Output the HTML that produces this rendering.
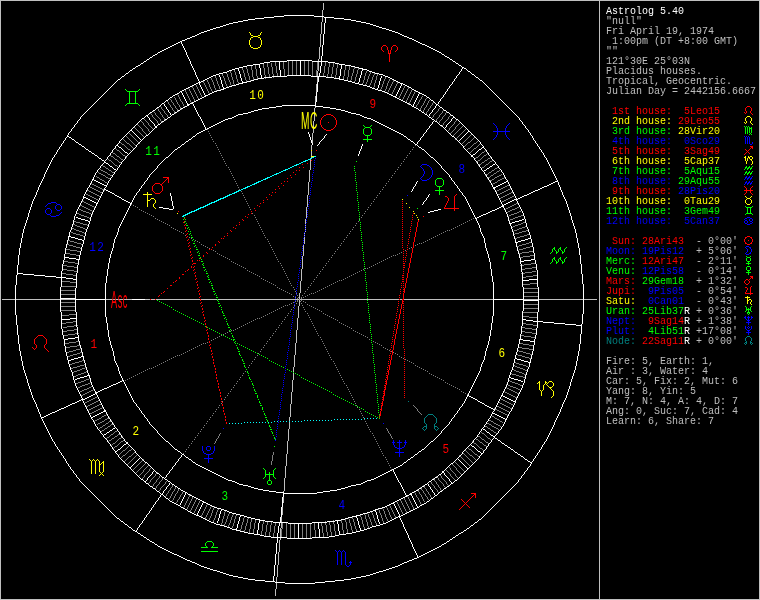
<!DOCTYPE html>
<html><head><meta charset="utf-8"><title>Astrolog 5.40</title>
<style>
html,body{margin:0;padding:0;background:#000;}
body{width:760px;height:600px;position:relative;overflow:hidden;font-family:"Liberation Mono",monospace;}
svg{will-change:transform;position:absolute;left:0;top:0;display:block}
#pix path{fill:none;stroke-width:1}
#hn text{font-family:"Liberation Mono",monospace;font-size:11px;text-anchor:middle;letter-spacing:1.4px}
#side{will-change:transform;position:absolute;left:606px;top:0;width:153px;color:#bfbfbf;font-size:10px;line-height:10px;}
#side div{position:absolute;left:0;white-space:pre;height:10px;}
.w{color:#fff}.r{color:#f00}.y{color:#ff0}.g{color:#0f0}.b{color:#00f}.c{color:#007f7f}.l{color:#bfbfbf}
</style></head><body>
<svg width="760" height="600" viewBox="0 0 760 600" shape-rendering="crispEdges">
<g id="pix">
<path stroke="#ffffff" transform="translate(0 .5)" d="M284 15h30M274 16h10M314 16h10M264 17h10M324 17h10M255 18h9M334 18h10M248 19h7M344 19h7M243 20h5M351 20h5M238 21h5M356 21h5M233 22h5M361 22h5M229 23h4M366 23h4M226 24h3M370 24h3M223 25h3M373 25h3M220 26h3M376 26h3M216 27h4M379 27h3M213 28h3M382 28h4M210 29h3M386 29h3M207 30h3M389 30h3M204 31h3M392 31h3M201 32h3M395 32h3M199 33h2M398 33h2M197 34h2M400 34h2M195 35h2M402 35h2M192 36h3M404 36h3M190 37h2M407 37h2M187 38h3M409 38h3M185 39h2M412 39h2M182 40h3M414 40h2M180 41h2M416 41h2M178 42h2M418 42h2M176 43h2M420 43h2M174 44h2M422 44h3M172 45h2M425 45h2M170 46h2M427 46h2M168 47h2M429 47h2M166 48h2M431 48h2M164 49h2M433 49h2M162 50h2M435 50h2M160 51h2M437 51h2M158 52h2M439 52h2M155 54h2M442 54h2M153 55h2M445 56h2M150 57h2M447 57h2M147 59h2M450 59h2M287 60h25M144 61h2M270 61h17M312 61h16M453 61h2M264 62h6M328 62h7M141 63h2M260 63h4M335 63h4M456 63h2M253 64h7M339 64h6M138 65h2M247 65h6M345 65h6M459 65h2M136 66h2M243 66h4M351 66h4M239 67h4M355 67h4M462 67h2M133 68h2M235 68h4M359 68h4M464 68h2M232 69h3M362 69h5M130 70h2M229 70h3M367 70h2M227 71h2M369 71h3M468 71h2M223 72h4M372 72h3M126 73h2M219 73h4M375 73h4M216 74h3M379 74h4M472 74h2M213 75h3M287 75h24M383 75h2M122 76h2M211 76h2M272 76h15M311 76h15M385 76h3M209 77h2M264 77h8M326 77h8M388 77h2M476 77h2M207 78h2M258 78h6M334 78h6M390 78h2M118 79h2M205 79h2M254 79h4M339 79h5M392 79h2M203 80h2M251 80h3M344 80h4M394 80h2M480 80h2M201 81h2M247 81h4M348 81h4M396 81h2M198 82h3M242 82h5M352 82h3M398 82h2M196 83h2M239 83h4M355 83h4M400 83h3M194 84h2M236 84h3M359 84h4M403 84h2M192 85h2M232 85h4M363 85h4M405 85h2M190 86h2M229 86h3M367 86h3M407 86h2M188 87h2M226 87h3M370 87h2M409 87h2M186 88h2M223 88h3M372 88h3M184 89h2M221 89h3M375 89h3M412 89h2M182 90h2M217 90h4M378 90h4M414 90h2M180 91h2M214 91h3M382 91h3M416 91h2M212 92h2M385 92h2M418 92h2M177 93h2M210 93h2M387 93h2M419 93h3M175 94h2M208 94h2M389 94h2M422 94h2M173 95h2M205 95h3M391 95h2M424 95h2M204 96h2M393 96h3M170 97h2M202 97h2M395 97h2M427 97h2M200 98h2M397 98h2M198 99h2M399 99h2M166 100h2M196 100h2M401 100h2M431 100h2M194 101h2M403 101h2M192 102h2M405 102h2M162 103h2M190 103h3M407 103h2M187 104h3M409 104h2M436 104h2M187 105h2M282 105h34M185 106h2M276 106h6M315 106h8M412 106h2M157 107h2M183 107h2M269 107h7M323 107h7M414 107h2M440 107h2M181 108h2M262 108h7M330 108h6M416 108h2M258 109h4M336 109h5M153 110h2M178 110h2M254 110h4M341 110h4M419 110h2M444 110h2M251 111h3M345 111h3M150 112h2M175 112h2M248 112h3M348 112h3M422 112h2M447 112h2M243 113h5M351 113h5M172 114h2M238 114h5M356 114h4M425 114h2M146 115h2M236 115h2M360 115h2M451 115h2M234 116h2M362 116h2M168 117h2M232 117h2M364 117h3M429 117h2M453 117h2M142 118h2M228 118h4M367 118h4M165 119h2M225 119h3M371 119h2M432 119h2M456 119h2M223 120h2M373 120h2M162 121h2M221 121h2M375 121h2M435 121h2M219 122h2M377 122h2M217 123h2M379 123h2M158 124h2M215 124h2M381 124h2M213 125h2M383 125h2M440 125h2M155 126h2M211 126h2M385 126h2M155 127h2M209 127h2M387 127h2M207 128h2M389 128h2M205 129h2M391 129h2M130 130h2M203 130h2M393 130h2M201 131h2M395 131h2M468 131h2M199 132h2M397 132h2M197 133h2M399 133h2M401 134h2M146 135h2M67 136h2M193 136h2M404 136h2M452 136h2M69 137h2M72 139h2M189 139h2M408 139h2M186 141h2M411 141h2M76 142h2M79 144h2M182 144h2M415 144h2M116 145h2M82 146h2M119 147h2M178 147h2M419 147h2M482 147h2M86 149h2M175 149h2M422 149h2M479 149h2M89 151h2M125 152h2M92 153h2M473 154h2M95 155h2M471 155h2M471 156h2M166 157h2M431 157h2M99 158h2M102 160h2M104 162h2M106 163h2M493 164h2M110 166h2M490 166h2M487 168h2M114 169h2M484 170h2M92 179h2M94 180h2M96 181h2M506 181h2M555 181h3M98 182h2M504 182h2M553 182h2M100 183h2M502 183h2M551 183h2M102 184h2M500 184h2M549 184h2M104 185h3M498 185h2M547 185h2M496 186h2M544 186h3M493 187h3M542 187h2M493 188h2M540 188h2M104 189h2M538 189h2M106 190h2M535 190h3M108 191h2M533 191h2M110 192h2M531 192h2M112 193h2M529 193h2M527 194h2M115 195h2M524 195h3M117 196h2M522 196h2M83 197h3M119 197h2M520 197h2M86 198h2M518 198h2M88 199h2M122 199h2M514 199h4M90 200h2M124 200h2M512 200h2M92 201h2M126 201h2M510 201h2M94 202h2M128 202h2M508 202h2M96 203h2M130 203h2M506 203h2M504 204h2M502 205h2M501 206h3M159 207h4M499 207h2M163 208h6M497 208h2M169 209h4M438 209h3M495 209h2M434 210h4M492 210h3M430 211h4M490 211h2M428 212h2M488 212h2M486 213h2M483 214h3M481 215h2M479 216h2M76 217h2M477 217h2M78 218h3M475 218h2M81 219h4M522 219h2M85 220h3M519 220h3M88 221h2M515 221h4M512 222h3M509 223h3M68 236h3M71 237h4M75 238h3M528 238h3M78 239h4M525 239h3M82 240h2M521 240h4M518 241h3M515 242h3M64 257h5M69 258h7M76 259h4M531 259h4M524 260h7M520 261h4M17 273h6M23 274h11M34 275h11M45 276h11M56 277h10M66 278h7M73 279h4M529 279h9M522 280h7M60 298h16M75 299h31M132 299h13M493 299h31M523 300h16M70 318h7M61 319h9M522 319h4M526 320h7M533 321h10M543 322h11M554 323h11M565 324h11M576 325h6M75 337h4M68 338h7M64 339h4M519 339h4M523 340h7M530 341h5M81 356h3M78 357h3M74 358h4M515 358h2M71 359h3M517 359h4M68 360h3M521 360h3M524 361h4M528 362h3M87 375h3M84 376h3M80 377h4M509 377h2M77 378h3M511 378h3M75 379h2M514 379h4M122 380h2M518 380h3M120 381h2M521 381h2M118 382h2M116 383h2M113 384h3M111 385h2M109 386h2M107 387h2M104 388h3M102 389h2M100 390h2M98 391h2M95 392h3M95 393h2M93 394h2M91 395h2M467 395h2M501 395h2M89 396h2M469 396h2M503 396h2M87 397h2M471 397h2M505 397h2M85 398h2M473 398h2M507 398h2M81 399h4M475 399h2M509 399h2M79 400h2M511 400h2M77 401h2M478 401h2M513 401h3M75 402h2M480 402h2M72 403h3M482 403h2M70 404h2M68 405h2M485 405h2M66 406h2M487 406h2M64 407h2M489 407h2M61 408h3M491 408h2M59 409h2M493 409h2M57 410h2M104 410h2M55 411h2M103 411h3M52 412h3M101 412h2M50 413h2M99 413h2M492 413h3M48 414h2M97 414h2M495 414h2M46 415h2M95 415h2M497 415h2M44 416h2M93 416h2M499 416h2M41 417h3M91 417h2M501 417h2M503 418h2M505 419h2M113 428h2M483 429h2M110 430h2M107 432h2M487 432h2M104 434h2M491 435h2M493 436h2M495 438h2M498 440h2M166 441h2M431 441h2M126 442h2M126 443h2M502 443h2M124 444h2M505 445h2M472 446h2M508 447h2M118 449h2M175 449h2M422 449h2M511 449h2M115 451h2M178 451h2M419 451h2M478 451h2M515 452h2M481 453h2M182 454h2M415 454h2M518 454h2M521 456h2M186 457h2M411 457h2M189 459h2M408 459h2M525 459h2M528 461h2M145 462h2M193 462h2M404 462h2M530 462h2M451 463h2M196 464h2M198 465h2M400 465h2M200 466h2M398 466h2M129 467h2M202 467h2M396 467h2M204 468h2M394 468h2M467 468h2M206 469h2M392 469h2M208 470h2M390 470h2M210 471h2M388 471h2M442 471h2M212 472h2M386 472h2M442 472h2M157 473h2M214 473h2M384 473h2M216 474h2M382 474h2M439 474h2M218 475h2M380 475h2M220 476h2M378 476h2M162 477h2M222 477h2M376 477h2M435 477h2M224 478h2M374 478h2M141 479h2M165 479h2M226 479h2M371 479h3M432 479h2M228 480h4M367 480h4M455 480h2M144 481h2M168 481h2M232 481h3M365 481h2M429 481h2M235 482h2M363 482h2M146 483h2M237 483h2M361 483h2M451 483h2M172 484h2M239 484h4M356 484h5M425 484h2M243 485h5M351 485h5M150 486h2M175 486h2M248 486h3M348 486h3M422 486h2M447 486h2M251 487h3M345 487h3M153 488h2M178 488h2M254 488h4M341 488h4M419 488h2M444 488h2M258 489h5M337 489h4M181 490h2M263 490h6M330 490h7M416 490h2M157 491h2M183 491h2M269 491h7M323 491h7M414 491h2M440 491h2M185 492h2M276 492h8M317 492h6M412 492h2M283 493h34M410 493h2M161 494h2M188 494h2M409 494h3M190 495h2M406 495h3M435 495h2M192 496h2M405 496h2M194 497h2M403 497h2M166 498h2M196 498h2M401 498h2M431 498h2M198 499h2M399 499h2M200 500h2M397 500h2M170 501h2M202 501h2M395 501h2M427 501h2M172 502h2M203 502h3M393 502h2M174 503h2M206 503h2M391 503h3M424 503h2M176 504h2M208 504h2M389 504h2M422 504h2M178 505h2M210 505h2M387 505h2M420 505h2M212 506h2M385 506h2M181 507h2M214 507h3M382 507h3M417 507h2M183 508h2M217 508h4M378 508h4M415 508h2M185 509h2M221 509h3M375 509h3M413 509h2M224 510h3M373 510h3M411 510h2M188 511h2M227 511h2M370 511h3M409 511h2M190 512h2M229 512h3M367 512h3M407 512h2M192 513h2M232 513h4M363 513h4M405 513h2M194 514h2M236 514h4M360 514h3M403 514h2M196 515h3M240 515h4M356 515h4M401 515h2M199 516h2M244 516h3M352 516h5M398 516h3M201 517h2M247 517h4M348 517h4M396 517h2M117 518h2M203 518h2M251 518h4M345 518h3M394 518h2M205 519h2M255 519h5M341 519h4M392 519h2M479 519h2M207 520h2M259 520h6M335 520h6M390 520h2M121 521h2M209 521h2M265 521h8M327 521h8M388 521h2M211 522h3M273 522h15M312 522h15M386 522h2M475 522h2M214 523h2M288 523h24M383 523h3M125 524h2M216 524h4M380 524h3M220 525h4M376 525h4M471 525h2M224 526h3M372 526h4M129 527h2M227 527h3M370 527h2M230 528h2M367 528h3M467 528h2M232 529h5M364 529h3M133 530h2M236 530h4M360 530h4M464 530h2M135 531h2M240 531h4M356 531h4M244 532h4M352 532h4M461 532h2M138 533h2M248 533h6M346 533h6M459 533h2M254 534h6M339 534h7M141 535h2M260 535h4M335 535h4M456 535h2M264 536h7M329 536h6M144 537h2M271 537h16M312 537h17M453 537h2M287 538h25M147 539h2M450 539h2M150 541h2M447 541h2M152 542h2M444 543h2M155 544h2M442 544h2M158 546h2M439 546h2M160 547h2M437 547h2M162 548h2M435 548h2M164 549h2M433 549h2M166 550h2M431 550h2M168 551h2M429 551h2M170 552h2M427 552h2M172 553h2M425 553h2M174 554h3M423 554h2M177 555h2M421 555h2M179 556h2M419 556h2M181 557h2M417 557h2M183 558h2M414 558h3M185 559h2M412 559h2M187 560h3M409 560h3M190 561h2M407 561h2M192 562h3M404 562h3M195 563h2M402 563h2M197 564h2M400 564h2M199 565h2M398 565h2M201 566h3M395 566h3M204 567h3M392 567h3M207 568h3M389 568h3M210 569h3M386 569h3M213 570h4M383 570h3M217 571h3M379 571h4M220 572h3M376 572h3M223 573h3M373 573h3M226 574h3M370 574h3M229 575h4M366 575h4M233 576h5M361 576h5M238 577h5M356 577h5M243 578h5M351 578h5M248 579h7M344 579h7M255 580h10M335 580h9M265 581h10M325 581h10M275 582h10M315 582h10M285 583h30"/>
<path stroke="#ffffff" transform="translate(.5 0)" d="M15 285v30M16 275v10M16 315v10M17 265v10M17 325v10M18 255v10M18 335v9M19 248v7M19 344v7M20 243v5M20 351v5M21 238v5M21 356v5M22 233v5M22 361v5M23 229v4M23 366v4M24 226v3M24 370v3M25 223v3M25 373v3M26 220v3M26 376v3M27 217v3M27 379v4M28 213v4M28 383v3M29 210v3M29 386v3M30 207v3M30 389v3M31 204v3M31 392v3M32 201v3M32 395v3M33 199v2M33 398v2M34 197v2M34 400v2M35 195v2M35 402v2M36 192v3M36 404v3M37 190v2M37 407v2M38 187v3M38 409v3M39 185v2M39 412v2M40 183v2M40 414v3M41 181v2M41 417v2M42 179v2M42 419v2M43 177v2M43 421v2M44 174v3M44 423v2M45 172v2M45 425v2M46 170v2M46 427v2M47 168v2M47 429v2M48 166v2M48 431v2M49 164v2M49 433v2M50 162v2M50 435v2M51 160v2M51 437v2M52 158v2M52 439v2M53 157v1M53 441v1M54 155v2M54 442v2M55 154v1M55 444v2M56 152v2M56 446v1M57 150v2M57 447v2M58 149v1M58 449v1M59 147v2M59 450v2M60 146v1M60 287v25M60 452v1M61 144v2M61 271v16M61 312v17M61 453v2M62 143v1M62 264v7M62 329v6M62 455v1M63 141v2M63 260v4M63 335v4M63 456v2M64 140v1M64 254v6M64 339v7M64 458v1M65 138v2M65 248v6M65 346v6M65 459v2M66 137v1M66 244v4M66 352v4M66 461v2M67 135v2M67 240v4M67 356v4M67 463v1M68 133v2M68 236v4M68 360v4M68 464v2M69 132v1M69 232v5M69 364v3M69 466v1M70 131v1M70 230v2M70 367v3M70 467v2M71 129v2M71 138v1M71 227v3M71 370v2M71 469v1M72 128v1M72 224v3M72 372v4M72 470v1M73 127v1M73 220v4M73 376v4M73 471v2M74 125v2M74 140v1M74 216v4M74 380v3M74 473v1M75 124v1M75 141v1M75 214v2M75 288v24M75 383v3M75 474v1M76 123v1M76 211v3M76 273v15M76 312v15M76 386v2M76 475v2M77 121v2M77 209v2M77 265v8M77 327v8M77 388v2M77 477v1M78 120v1M78 143v1M78 207v2M78 259v6M78 335v6M78 390v2M78 478v1M79 119v1M79 205v2M79 255v5M79 341v4M79 392v2M79 479v2M80 117v2M80 203v2M80 251v4M80 345v3M80 394v2M80 481v1M81 116v1M81 145v1M81 201v2M81 247v4M81 348v4M81 396v2M81 482v1M82 115v1M82 199v2M82 244v3M82 352v5M82 398v3M82 483v1M83 114v1M83 196v3M83 240v4M83 356v4M83 401v2M83 484v1M84 113v1M84 147v1M84 194v2M84 236v4M84 360v3M84 403v2M84 485v1M85 112v1M85 148v1M85 192v2M85 232v4M85 363v4M85 405v2M85 486v1M86 111v1M86 190v2M86 229v3M86 367v3M86 407v2M86 487v1M87 110v1M87 188v2M87 227v2M87 370v3M87 409v2M87 488v1M88 109v1M88 150v1M88 187v1M88 224v3M88 373v3M88 411v2M88 489v1M89 108v1M89 185v2M89 221v3M89 375v3M89 413v2M89 490v1M90 107v1M90 183v2M90 217v4M90 378v4M90 415v2M90 491v1M91 106v1M91 152v1M91 181v2M91 214v3M91 382v3M91 417v2M91 492v1M92 105v1M92 179v2M92 212v2M92 385v2M92 419v1M92 493v1M93 104v1M93 177v3M93 210v2M93 387v2M93 420v2M93 494v1M94 103v1M94 154v1M94 175v2M94 208v2M94 389v2M94 422v2M94 495v1M95 102v1M95 173v2M95 206v2M95 391v3M95 424v2M95 496v1M96 101v1M96 172v1M96 203v3M96 392v3M96 426v1M96 497v1M97 100v1M97 156v1M97 170v2M97 202v2M97 395v2M97 427v2M97 498v1M98 99v1M98 157v1M98 169v1M98 200v2M98 397v2M98 429v1M98 499v1M99 98v1M99 168v1M99 198v2M99 399v2M99 430v1M99 500v1M100 97v1M100 166v2M100 196v2M100 401v2M100 431v2M100 501v1M101 96v1M101 159v1M101 165v1M101 194v2M101 403v2M101 433v1M101 502v1M102 95v1M102 164v1M102 192v2M102 405v2M102 434v1M102 503v1M103 94v1M103 163v1M103 190v2M103 407v2M103 435v2M103 504v1M104 93v1M104 161v2M104 188v2M104 409v3M104 437v1M104 505v1M105 92v1M105 160v1M105 187v1M105 283v34M105 438v1M105 506v1M106 91v1M106 159v1M106 185v2M106 276v7M106 317v6M106 412v2M106 433v1M106 439v1M106 507v1M107 90v1M107 157v2M107 183v2M107 269v7M107 323v7M107 414v2M107 440v2M107 508v1M108 89v1M108 156v1M108 164v1M108 181v2M108 263v6M108 330v7M108 416v2M108 442v1M108 509v1M109 88v1M109 155v1M109 165v1M109 180v1M109 258v5M109 337v4M109 418v1M109 431v1M109 443v1M109 510v1M110 87v1M110 153v2M110 178v2M110 254v4M110 341v4M110 419v2M110 444v2M110 511v1M111 86v1M111 152v1M111 177v1M111 251v3M111 345v3M111 421v1M111 446v1M111 512v1M112 85v1M112 150v2M112 167v1M112 175v2M112 248v3M112 348v3M112 422v2M112 429v1M112 447v2M112 513v1M113 84v1M113 149v1M113 168v1M113 174v1M113 243v5M113 351v5M113 424v1M113 449v1M113 514v1M114 83v1M114 148v1M114 172v2M114 194v1M114 239v4M114 356v5M114 425v2M114 450v1M114 515v1M115 82v1M115 146v2M115 171v1M115 237v2M115 361v2M115 427v1M115 451v2M115 516v1M116 81v1M116 170v1M116 235v2M116 363v2M116 428v1M116 453v1M116 517v1M117 80v1M117 144v2M117 168v2M117 232v3M117 365v2M117 429v2M117 450v1M117 454v1M118 143v1M118 146v1M118 167v1M118 228v4M118 367v4M118 431v1M118 455v2M119 141v2M119 165v2M119 226v2M119 371v3M119 432v2M119 457v1M119 519v1M120 78v1M120 140v1M120 164v1M120 224v2M120 374v2M120 434v1M120 448v1M120 458v1M120 520v1M121 77v1M121 139v1M121 148v1M121 162v2M121 198v1M121 222v2M121 376v2M121 435v2M121 447v1M121 459v1M122 138v1M122 149v1M122 161v1M122 220v2M122 378v3M122 437v1M122 446v1M122 460v1M123 137v1M123 150v1M123 160v1M123 218v2M123 380v2M123 438v1M123 445v1M123 461v1M123 522v1M124 75v1M124 136v1M124 151v1M124 159v1M124 216v2M124 382v2M124 439v2M124 462v1M124 523v1M125 74v1M125 135v1M125 157v2M125 214v2M125 384v2M125 441v1M125 463v1M126 134v1M126 156v1M126 212v2M126 386v2M126 464v1M127 133v1M127 153v1M127 155v1M127 210v2M127 388v2M127 465v1M127 525v1M128 72v1M128 132v1M128 154v1M128 208v2M128 390v2M128 444v1M128 466v1M128 526v1M129 71v1M129 131v1M129 153v1M129 206v2M129 392v2M129 445v1M130 152v1M130 203v3M130 394v2M130 446v1M130 467v2M131 129v2M131 151v1M131 202v2M131 396v2M131 447v1M131 466v1M131 469v1M131 528v1M132 69v1M132 128v1M132 131v1M132 150v1M132 200v2M132 398v2M132 448v1M132 465v1M132 470v1M132 529v1M133 127v1M133 132v1M133 149v1M133 198v2M133 400v2M133 449v1M133 464v1M133 471v1M134 126v1M134 133v1M134 148v1M134 196v2M134 402v1M134 450v1M134 463v1M134 472v1M135 67v1M135 125v1M135 134v1M135 147v1M135 195v1M135 403v1M135 451v2M135 462v1M135 473v1M136 124v1M136 135v1M136 145v2M136 193v2M136 404v2M136 453v1M136 461v1M136 474v1M136 530v2M137 123v1M137 136v1M137 144v1M137 192v1M137 406v1M137 454v1M137 460v1M137 475v1M137 528v2M137 532v1M138 122v1M138 137v1M138 143v1M138 191v1M138 407v1M138 455v1M138 459v1M138 476v1M138 527v1M139 121v1M139 138v1M139 142v1M139 189v2M139 408v2M139 456v1M139 458v1M139 477v1M139 525v2M140 64v1M140 120v1M140 139v1M140 141v1M140 188v1M140 410v1M140 457v1M140 478v1M140 524v1M140 534v1M141 119v1M141 140v1M141 186v2M141 411v2M141 458v1M141 523v1M142 139v1M142 185v1M142 413v1M142 459v1M142 521v2M143 62v1M143 138v1M143 184v1M143 414v1M143 460v1M143 480v1M143 520v1M143 536v1M144 117v1M144 137v1M144 182v2M144 415v2M144 461v1M144 518v2M145 116v1M145 136v1M145 181v1M145 417v1M145 481v2M145 517v1M146 60v1M146 180v1M146 418v1M146 480v1M146 515v2M146 538v1M147 115v2M147 178v2M147 419v2M147 463v1M147 478v2M147 514v1M148 114v1M148 117v1M148 134v1M148 177v1M148 421v1M148 464v1M148 477v1M148 484v1M148 513v1M149 58v1M149 113v1M149 118v2M149 133v1M149 175v2M149 422v2M149 465v1M149 476v1M149 485v1M149 511v2M149 540v1M150 120v1M150 132v1M150 174v1M150 424v1M150 466v1M150 475v1M150 510v1M151 121v1M151 131v1M151 173v1M151 425v1M151 467v1M151 474v1M151 508v2M152 56v1M152 111v1M152 122v1M152 130v1M152 172v1M152 426v1M152 468v1M152 472v2M152 487v1M152 507v1M153 123v1M153 129v1M153 171v1M153 427v1M153 469v1M153 471v1M153 505v2M154 124v2M154 128v1M154 170v1M154 428v1M154 470v1M154 504v1M154 543v1M155 109v1M155 169v1M155 429v1M155 471v1M155 489v1M155 502v2M156 108v1M156 168v1M156 430v1M156 472v1M156 490v1M156 501v1M157 53v1M157 125v1M157 166v2M157 431v2M157 500v1M157 545v1M158 165v1M158 433v1M158 498v2M159 106v1M159 164v1M159 434v1M159 474v1M159 492v1M159 497v1M160 105v1M160 123v1M160 163v1M160 435v1M160 475v1M160 493v1M160 495v2M161 104v1M161 122v1M161 162v1M161 436v1M161 476v1M162 161v1M162 437v1M162 493v2M163 160v1M163 438v1M163 491v2M163 495v1M164 102v1M164 104v2M164 120v1M164 159v1M164 439v1M164 478v1M164 490v1M164 496v1M165 101v1M165 106v1M165 158v1M165 440v1M165 477v1M165 489v1M165 497v1M166 107v2M166 475v2M166 487v2M167 109v1M167 118v1M167 474v1M167 480v1M167 486v1M168 99v1M168 110v2M168 156v1M168 442v1M168 473v1M168 485v1M168 499v1M169 98v1M169 112v1M169 155v1M169 443v1M169 471v2M169 483v2M169 500v1M170 113v2M170 116v1M170 154v1M170 193v3M170 444v1M170 470v1M170 482v1M171 115v1M171 153v1M171 196v5M171 445v1M171 469v1M171 483v1M172 96v1M172 152v1M172 201v5M172 446v1M172 467v2M173 151v1M173 206v3M173 447v1M173 466v1M174 113v1M174 150v1M174 448v1M174 465v1M174 485v1M175 463v2M176 462v1M177 111v1M177 148v1M177 450v1M177 461v1M177 487v1M178 459v2M179 92v1M179 458v1M180 109v1M180 146v1M180 452v1M180 457v1M180 489v1M180 503v2M180 506v1M181 41v3M181 91v2M181 145v1M181 453v1M181 455v2M181 501v2M182 44v2M182 93v2M182 499v2M183 46v2M183 95v2M183 497v2M184 48v2M184 97v2M184 143v1M184 455v1M184 495v2M185 50v2M185 99v2M185 142v1M185 456v1M185 492v3M186 52v3M186 101v2M187 55v2M187 103v3M187 493v1M187 510v1M188 57v2M188 140v1M188 458v1M189 59v2M190 61v3M191 64v2M191 138v1M191 460v1M192 66v2M192 137v1M192 461v1M193 68v2M193 104v2M194 70v2M194 106v2M195 72v3M195 108v2M195 135v1M195 463v1M196 75v2M196 110v2M196 134v1M197 77v2M197 112v2M197 513v3M198 79v2M198 114v2M198 511v2M199 81v4M199 116v1M199 509v2M200 85v2M200 117v2M200 507v2M201 87v2M201 119v2M201 505v2M202 89v2M202 121v2M202 503v2M203 91v2M203 123v2M204 93v2M204 125v2M205 127v3M217 521v2M218 518v3M219 75v2M219 514v4M220 77v3M220 511v3M221 80v4M221 509v2M222 84v3M223 87v3M236 528v3M237 524v4M238 68v3M238 521v3M239 71v3M239 517v4M240 74v4M240 515v2M241 78v3M242 81v3M257 530v5M258 523v7M259 64v4M259 519v4M260 68v7M261 75v4M273 576v6M274 565v11M275 554v11M276 543v11M277 533v10M278 526v7M279 61v9M279 522v4M280 70v7M280 517v6M281 507v10M282 497v10M283 492v5M298 523v16M300 60v16M308 132v2M309 134v3M310 137v3M311 140v3M312 143v2M315 102v5M316 92v10M317 82v10M317 145v1M318 76v6M318 144v1M318 522v7M319 73v4M319 142v2M319 529v9M320 66v7M320 141v1M321 56v10M321 140v1M322 45v11M322 139v1M323 34v11M323 138v1M324 23v11M324 136v2M325 17v6M325 135v1M326 134v1M337 520v4M338 524v7M339 76v4M339 531v4M340 69v7M341 64v5M356 515v3M357 518v3M358 82v2M358 154v2M358 521v4M359 78v4M359 151v3M359 525v3M360 75v3M360 149v2M360 528v3M361 71v4M361 146v3M362 68v3M362 144v2M375 509v3M376 512v3M377 88v2M377 515v4M378 85v3M378 519v3M379 81v4M379 522v2M380 78v3M381 76v2M393 469v3M394 472v2M394 504v2M395 474v2M395 506v2M396 94v2M396 476v2M396 508v2M397 92v2M397 478v2M397 510v2M398 90v2M398 480v2M398 512v2M399 88v2M399 482v1M399 514v4M400 86v2M400 483v2M400 518v2M401 83v3M401 485v2M401 520v2M402 464v1M402 487v2M402 522v2M403 135v1M403 463v1M403 489v2M403 524v3M404 491v2M404 527v2M405 493v2M405 529v2M406 137v1M406 461v1M406 531v2M407 138v1M407 460v1M407 533v2M408 535v3M409 538v2M410 140v1M410 458v1M410 540v2M411 88v1M411 105v1M411 191v1M411 493v3M411 542v2M412 189v2M412 496v2M412 544v3M413 104v3M413 142v1M413 187v2M413 456v1M413 498v2M413 547v2M414 102v2M414 143v1M414 186v1M414 455v1M414 500v2M414 549v2M415 100v2M415 184v2M415 502v2M415 551v2M416 98v2M416 182v2M416 504v2M416 553v2M417 96v2M417 142v2M417 145v1M417 181v1M417 453v1M417 506v2M417 555v3M418 94v2M418 109v1M418 141v1M418 146v1M418 452v1M418 489v1M419 140v1M419 506v1M420 138v2M421 111v1M421 137v1M421 148v1M421 450v1M421 487v1M422 136v1M422 204v1M423 134v2M423 202v2M424 113v1M424 133v1M424 150v1M424 201v1M424 448v1M424 485v1M425 132v1M425 151v1M425 200v1M425 447v1M426 96v1M426 130v2M426 152v1M426 198v2M426 446v1M426 502v1M427 115v1M427 129v1M427 153v1M427 197v1M427 445v1M427 483v1M428 116v1M428 128v1M428 154v1M428 195v2M428 444v1M428 482v1M428 484v2M429 98v1M429 114v2M429 126v2M429 155v1M429 194v1M429 443v1M429 486v1M429 500v1M430 99v1M430 113v1M430 125v1M430 156v1M430 442v1M430 487v2M430 499v1M431 112v1M431 118v1M431 124v1M431 480v1M431 489v1M432 110v2M432 122v2M432 490v2M433 101v1M433 109v1M433 121v1M433 158v1M433 440v1M433 492v1M433 497v1M434 102v1M434 108v1M434 120v1M434 159v1M434 439v1M434 478v1M434 493v2M434 496v1M435 103v1M435 106v2M435 160v1M435 438v1M436 104v2M436 161v1M436 437v1M437 122v1M437 162v1M437 436v1M437 476v1M437 494v1M438 102v2M438 105v1M438 123v1M438 163v1M438 435v1M438 475v1M438 493v1M439 101v1M439 106v1M439 124v1M439 164v1M439 434v1M439 492v1M440 99v2M440 165v1M440 433v1M441 53v1M441 98v1M441 166v2M441 431v2M441 473v1M441 545v1M442 97v1M442 108v1M442 126v1M442 168v1M442 430v1M442 490v1M443 95v2M443 109v1M443 127v1M443 169v1M443 429v1M443 489v1M444 55v1M444 94v1M444 128v1M444 170v1M444 428v1M444 470v1M444 473v2M445 92v2M445 127v1M445 129v1M445 171v1M445 427v1M445 469v1M445 475v1M446 91v1M446 111v1M446 125v2M446 130v1M446 172v1M446 426v1M446 468v1M446 476v1M446 487v1M446 542v1M447 89v2M447 124v1M447 131v1M447 173v1M447 425v1M447 467v1M447 477v1M448 88v1M448 123v1M448 132v1M448 174v1M448 424v1M448 466v1M448 478v1M449 58v1M449 86v2M449 113v1M449 122v1M449 133v1M449 175v2M449 422v2M449 465v1M449 479v2M449 485v1M449 540v1M450 85v1M450 114v1M450 121v1M450 134v1M450 177v1M450 421v1M450 464v1M450 481v1M450 484v1M451 84v1M451 119v2M451 135v1M451 178v2M451 419v2M451 482v2M452 60v1M452 82v2M452 118v1M452 180v1M452 418v1M452 538v1M453 81v1M453 116v2M453 181v1M453 417v1M453 462v1M453 482v1M454 79v2M454 137v1M454 182v2M454 415v2M454 461v1M454 481v1M455 62v1M455 78v1M455 118v1M455 138v1M455 184v1M455 414v1M455 460v1M455 536v1M456 76v2M456 139v1M456 185v1M456 413v1M456 459v1M457 75v1M457 140v1M457 186v2M457 411v2M457 458v1M457 479v1M458 64v1M458 74v1M458 120v1M458 141v1M458 188v1M458 410v1M458 457v1M458 459v1M458 478v1M458 534v1M459 72v2M459 121v1M459 140v1M459 142v1M459 189v2M459 408v2M459 456v1M459 460v1M459 477v1M460 71v1M460 122v1M460 139v1M460 143v1M460 191v1M460 407v1M460 455v1M460 461v1M460 476v1M461 66v1M461 69v2M461 123v1M461 138v1M461 144v1M461 192v1M461 406v1M461 454v1M461 462v1M461 475v1M462 67v2M462 124v1M462 137v1M462 145v1M462 193v2M462 404v2M462 452v2M462 463v1M462 474v1M463 125v1M463 136v1M463 146v2M463 195v1M463 403v1M463 451v1M463 464v1M463 473v1M463 531v1M464 126v1M464 135v1M464 148v1M464 196v1M464 401v2M464 450v1M464 465v1M464 472v1M465 127v1M465 134v1M465 149v1M465 197v2M465 399v2M465 449v1M465 466v1M465 471v1M466 69v1M466 128v1M466 133v1M466 150v1M466 199v2M466 397v2M466 448v1M466 467v1M466 470v1M466 529v1M467 70v1M467 129v1M467 132v1M467 151v1M467 201v2M467 395v2M467 447v1M467 468v2M468 130v2M468 152v1M468 203v2M468 393v3M468 446v1M469 153v1M469 205v2M469 391v2M469 445v1M469 467v1M469 527v1M470 72v1M470 132v1M470 154v1M470 207v2M470 389v2M470 444v1M470 466v1M470 526v1M471 73v1M471 133v1M471 209v2M471 387v2M471 443v1M471 445v1M471 465v1M472 134v1M472 211v2M472 385v2M472 442v1M472 464v1M473 135v1M473 157v1M473 213v2M473 383v2M473 440v2M473 463v1M473 524v1M474 75v1M474 136v1M474 158v2M474 215v2M474 381v2M474 439v1M474 447v1M474 462v1M474 523v1M475 76v1M475 137v1M475 153v1M475 160v1M475 217v2M475 379v2M475 438v1M475 448v1M475 461v1M476 138v1M476 152v1M476 161v1M476 218v3M476 377v2M476 437v1M476 449v1M476 460v1M477 139v1M477 151v1M477 162v2M477 221v2M477 375v2M477 400v1M477 435v2M477 450v1M477 459v1M477 521v1M478 78v1M478 140v1M478 150v1M478 164v1M478 223v2M478 373v2M478 434v1M478 458v1M478 520v1M479 79v1M479 141v1M479 165v2M479 225v3M479 371v2M479 432v2M479 456v2M480 142v2M480 167v1M480 228v4M480 367v4M480 431v1M480 452v1M480 455v1M481 144v1M481 148v1M481 168v2M481 232v2M481 364v3M481 429v2M481 453v2M481 518v1M482 81v1M482 145v1M482 170v1M482 234v2M482 362v2M482 428v1M482 517v1M483 82v1M483 146v2M483 171v1M483 236v2M483 360v2M483 427v1M483 451v2M483 516v1M484 83v1M484 148v1M484 172v2M484 238v5M484 356v4M484 404v1M484 425v2M484 450v1M484 515v1M485 84v1M485 149v1M485 174v1M485 243v5M485 351v5M485 424v1M485 430v1M485 449v1M485 514v1M486 85v1M486 150v2M486 169v1M486 175v2M486 248v3M486 348v3M486 422v2M486 431v1M486 447v2M486 513v1M487 86v1M487 152v1M487 177v1M487 251v3M487 345v3M487 421v1M487 446v1M487 512v1M488 87v1M488 153v2M488 178v2M488 254v4M488 341v4M488 419v2M488 444v2M488 511v1M489 88v1M489 155v1M489 167v1M489 180v1M489 258v4M489 336v5M489 418v1M489 433v1M489 443v1M489 510v1M490 89v1M490 156v1M490 181v2M490 262v7M490 330v6M490 416v2M490 434v1M490 442v1M490 509v1M491 90v1M491 157v2M491 183v2M491 269v7M491 323v7M491 414v2M491 440v2M491 508v1M492 91v1M492 159v1M492 165v1M492 185v2M492 276v6M492 316v7M492 412v2M492 439v1M492 507v1M493 92v1M493 160v1M493 282v34M493 411v1M493 438v1M493 506v1M494 93v1M494 161v1M494 187v3M494 409v2M494 436v2M494 505v1M495 94v1M495 162v2M495 190v2M495 407v2M495 435v1M495 504v1M496 95v1M496 164v1M496 192v2M496 405v2M496 434v1M496 503v1M497 96v1M497 165v1M497 194v2M497 403v2M497 433v1M497 439v1M497 502v1M498 97v1M498 166v2M498 196v2M498 401v2M498 431v2M498 501v1M499 98v1M499 168v1M499 198v2M499 399v2M499 430v1M499 500v1M500 99v1M500 169v1M500 200v2M500 397v2M500 429v1M500 441v1M500 499v1M501 100v1M501 170v2M501 202v2M501 395v2M501 427v2M501 442v1M501 498v1M502 101v1M502 172v1M502 204v3M502 393v3M502 426v1M502 497v1M503 102v1M503 173v2M503 205v3M503 391v2M503 424v2M503 496v1M504 103v1M504 175v2M504 208v2M504 389v2M504 422v2M504 444v1M504 495v1M505 104v1M505 177v2M505 210v2M505 387v2M505 419v3M505 494v1M506 105v1M506 179v1M506 212v2M506 385v2M506 418v2M506 493v1M507 106v1M507 180v2M507 214v3M507 382v3M507 416v2M507 446v1M507 492v1M508 107v1M508 182v2M508 217v4M508 378v4M508 414v2M508 491v1M509 108v1M509 184v2M509 221v3M509 375v3M509 412v2M509 490v1M510 109v1M510 186v2M510 223v3M510 372v3M510 411v1M510 448v1M510 489v1M511 110v1M511 188v2M511 226v3M511 370v2M511 409v2M511 488v1M512 111v1M512 190v2M512 229v3M512 367v3M512 407v2M512 487v1M513 112v1M513 192v2M513 232v4M513 363v4M513 405v2M513 450v1M513 486v1M514 113v1M514 194v2M514 236v3M514 359v4M514 403v2M514 451v1M514 485v1M515 114v1M515 196v2M515 239v4M515 355v4M515 400v3M515 484v1M516 115v1M516 198v3M516 242v5M516 352v3M516 398v2M516 483v1M517 116v1M517 201v2M517 247v4M517 348v4M517 396v2M517 453v1M517 482v1M518 117v1M518 203v2M518 251v3M518 344v4M518 394v2M518 480v2M519 118v2M519 205v2M519 254v4M519 339v5M519 392v2M519 479v1M520 120v1M520 207v2M520 258v6M520 334v6M520 390v2M520 455v1M520 478v1M521 121v1M521 209v2M521 264v8M521 326v8M521 388v2M521 476v2M522 122v2M522 211v2M522 272v15M522 311v15M522 385v3M522 475v1M523 124v1M523 213v3M523 287v24M523 383v2M523 457v1M523 474v1M524 125v1M524 216v3M524 379v4M524 458v1M524 472v2M525 126v2M525 219v4M525 375v4M525 471v1M526 128v1M526 223v4M526 372v3M526 470v1M527 129v1M527 227v2M527 369v3M527 460v1M527 468v2M528 130v2M528 229v3M528 367v2M528 467v1M529 132v1M529 232v3M529 362v5M529 466v1M530 133v2M530 235v4M530 359v4M530 464v2M531 135v1M531 239v4M531 355v4M531 462v2M532 136v2M532 243v4M532 351v4M532 461v1M533 138v2M533 247v6M533 345v6M533 459v2M534 140v1M534 253v7M534 339v6M534 458v1M535 141v2M535 260v4M535 335v4M535 456v2M536 143v1M536 264v6M536 328v7M536 455v1M537 144v2M537 270v17M537 312v16M537 453v2M538 146v1M538 287v25M538 452v1M539 147v2M539 450v2M540 149v1M540 449v1M541 150v2M541 447v2M542 152v1M542 445v2M543 153v2M543 444v1M544 155v2M544 442v2M545 157v1M545 441v1M546 158v2M546 439v2M547 160v2M547 437v2M548 162v2M548 435v2M549 164v2M549 433v2M550 166v2M550 431v2M551 168v2M551 429v2M552 170v2M552 427v2M553 172v2M553 425v2M554 174v2M554 422v3M555 176v2M555 420v2M556 178v2M556 418v2M557 180v2M557 416v2M558 182v3M558 414v2M559 185v2M559 412v2M560 187v3M560 409v3M561 190v2M561 407v2M562 192v3M562 404v3M563 195v2M563 402v2M564 197v2M564 400v2M565 199v2M565 398v2M566 201v3M566 395v3M567 204v3M567 392v3M568 207v3M568 389v3M569 210v3M569 386v3M570 213v3M570 382v4M571 216v4M571 379v3M572 220v3M572 376v3M573 223v3M573 373v3M574 226v3M574 370v3M575 229v4M575 366v4M576 233v5M576 361v5M577 238v5M577 356v5M578 243v5M578 351v5M579 248v7M579 344v7M580 255v9M580 334v10M581 264v10M581 324v10M582 274v10M582 314v10M583 284v30"/>
<path stroke="#bfbfbf" transform="translate(0 .5)" d="M0 0h760M2 299h13M16 299h44M61 299h14M106 299h26M145 299h5M151 299h4M156 299h44M201 299h16M218 299h81M300 299h99M400 299h2M404 299h89M524 299h14M539 299h44M584 299h13M0 599h760"/>
<path stroke="#bfbfbf" transform="translate(.5 0)" d="M0 0v600M275 589v7M276 577v5M276 583v6M277 565v12M278 552v13M279 540v12M280 528v9M280 538v2M281 517v5M281 523v5M282 507v8M283 491v1M283 497v6M284 478v13M285 466v12M286 454v12M287 441v13M288 429v12M289 417v4M289 422v7M290 404v13M291 392v12M292 380v12M293 367v5M293 373v7M294 355v12M295 343v12M296 330v13M297 318v12M298 306v12M299 293v6M299 300v6M300 281v12M301 269v12M302 256v13M303 245v11M304 233v1M304 235v1M304 237v7M305 219v5M305 225v1M305 227v1M305 229v1M305 231v1M306 207v11M307 195v12M308 182v13M309 170v12M310 159v11M311 145v5M311 151v5M311 157v1M312 133v10M313 121v12M314 108v13M315 96v6M315 107v1M316 84v8M317 71v5M317 77v5M318 59v2M318 62v9M319 47v12M320 34v13M321 22v12M322 10v6M322 17v5M323 3v7M599 0v600M759 0v600"/>
<path stroke="#7f7f7f" transform="translate(0 .5)" d="M468 142h2M127 143h2M474 143h2M122 144h2M468 148h2M474 148h2M128 149h2M117 150h2M482 152h2M113 153h2M123 155h2M484 155h2M111 156h2M117 156h2M476 157h2M488 158h2M115 159h2M121 159h2M109 160h2M478 160h2M485 160h2M490 161h2M119 162h2M482 162h2M479 164h2M486 164h2M115 165h2M103 166h2M482 167h2M106 168h2M495 168h2M101 170h2M109 170h2M492 170h2M103 171h2M497 171h2M105 172h2M112 172h2M489 172h2M99 173h2M494 173h2M101 174h2M108 174h2M486 174h2M103 175h2M110 175h2M491 175h2M499 175h2M497 176h2M97 177h2M106 177h2M488 177h2M495 177h2M108 178h2M502 178h2M100 179h2M492 179h2M500 179h2M102 180h2M490 180h2M498 180h2M105 182h2M495 182h2M493 183h2M92 184h2M94 185h2M507 185h2M96 186h2M505 186h2M90 187h2M98 187h2M503 187h2M92 188h2M100 188h2M501 188h2M94 189h2M102 189h2M499 189h2M508 189h2M87 190h2M96 190h2M497 190h2M506 190h2M89 191h2M98 191h2M504 191h2M91 192h2M100 192h2M502 192h2M511 192h2M93 193h2M500 193h2M509 193h2M86 194h2M95 194h2M498 194h2M507 194h2M88 195h2M97 195h2M505 195h2M90 196h2M503 196h2M512 196h2M92 197h2M501 197h2M510 197h2M94 198h2M508 198h2M96 199h2M506 199h2M504 200h2M82 201h2M502 201h2M84 202h2M86 203h2M516 203h2M88 204h2M514 204h2M80 205h2M90 205h2M512 205h2M82 206h2M92 206h2M510 206h2M84 207h2M508 207h2M517 207h2M86 208h2M506 208h2M515 208h2M79 209h2M88 209h2M512 209h3M81 210h2M90 210h2M510 210h2M83 211h3M508 211h2M519 211h2M86 212h3M517 212h2M77 213h2M89 213h2M514 213h3M79 214h2M511 214h3M81 215h3M509 215h2M521 215h2M84 216h3M518 216h3M87 217h2M515 217h3M513 218h2M510 219h3M74 221h2M76 222h4M523 222h2M80 223h3M521 223h2M73 224h2M83 224h4M518 224h3M75 225h2M515 225h3M77 226h3M513 226h2M80 227h3M522 227h3M72 228h2M83 228h2M519 228h3M74 229h2M517 229h2M76 230h3M514 230h3M526 230h2M79 231h3M522 231h4M71 232h2M82 232h2M519 232h3M73 233h3M515 233h4M76 234h4M527 234h2M80 235h3M524 235h3M520 236h4M517 237h3M515 238h2M68 240h2M70 241h4M74 242h3M529 242h2M77 243h4M526 243h3M67 244h2M522 244h4M69 245h4M519 245h3M73 246h3M517 246h2M530 246h2M76 247h4M526 247h4M523 248h3M66 249h4M519 249h4M70 250h7M77 251h3M529 251h4M522 252h7M66 253h4M519 253h3M70 254h6M76 255h3M530 255h4M523 256h7M520 257h3M64 261h4M68 262h7M75 263h3M531 263h4M524 264h7M63 265h4M522 265h2M67 266h7M74 267h3M532 267h4M525 268h7M63 269h4M522 269h3M67 270h7M74 271h3M532 271h4M525 272h7M62 273h4M523 273h2M66 274h7M73 275h3M533 275h4M526 276h7M523 277h3M62 281h8M70 282h6M530 283h7M523 284h7M62 286h14M524 288h14M61 290h14M524 292h14M61 294h14M524 296h14M61 302h14M524 304h14M61 306h14M524 308h14M61 310h14M523 312h14M69 314h7M62 315h7M523 316h6M529 317h8M73 321h3M66 322h7M62 323h4M523 323h3M526 324h7M74 325h2M533 325h4M67 326h7M63 327h4M522 327h3M525 328h7M74 329h3M532 329h4M67 330h7M63 331h4M522 331h3M525 332h7M75 333h2M532 333h4M68 334h7M64 335h4M521 335h3M524 336h7M531 337h4M76 341h3M69 342h7M65 343h4M520 343h3M523 344h6M77 345h3M529 345h4M70 346h7M66 347h4M519 347h3M522 348h7M76 349h4M529 349h4M73 350h3M69 351h4M519 351h4M67 352h2M80 352h2M523 352h3M77 353h3M526 353h4M73 354h4M530 354h2M70 355h3M518 355h4M68 356h2M522 356h3M525 357h4M529 358h2M82 360h2M79 361h3M75 362h4M72 363h3M516 363h3M70 364h2M519 364h4M80 365h4M523 365h3M77 366h3M515 366h2M526 366h2M73 367h4M517 367h3M71 368h2M82 368h3M520 368h3M80 369h2M523 369h2M77 370h3M514 370h2M525 370h2M74 371h3M516 371h3M84 372h2M519 372h3M81 373h3M522 373h2M78 374h3M512 374h4M524 374h2M76 375h2M516 375h3M74 376h2M519 376h4M523 377h2M86 379h3M84 380h2M81 381h3M510 381h2M78 382h3M512 382h3M76 383h2M88 383h2M515 383h3M85 384h3M518 384h2M82 385h3M508 385h2M520 385h2M80 386h2M510 386h3M78 387h2M89 387h2M513 387h3M87 388h2M507 388h2M516 388h2M84 389h3M509 389h2M518 389h2M82 390h2M91 390h2M511 390h2M80 391h2M89 391h2M513 391h2M87 392h2M505 392h2M515 392h2M85 393h2M507 393h2M517 393h2M83 394h2M509 394h2M81 395h2M511 395h2M513 396h2M95 397h2M515 397h2M93 398h2M91 399h2M501 399h2M89 400h2M503 400h2M87 401h2M96 401h2M505 401h2M85 402h2M94 402h2M507 402h2M92 403h2M500 403h2M509 403h2M90 404h2M99 404h2M502 404h2M511 404h2M88 405h2M97 405h2M504 405h2M86 406h2M95 406h2M497 406h2M506 406h2M93 407h2M499 407h2M508 407h2M91 408h2M100 408h2M501 408h2M510 408h2M89 409h2M98 409h2M495 409h2M503 409h2M96 410h2M497 410h2M505 410h2M94 411h2M499 411h2M507 411h2M92 412h2M501 412h2M90 413h2M503 413h2M505 414h2M104 415h2M102 416h2M492 416h2M99 418h2M107 418h2M495 418h2M97 419h2M105 419h2M497 419h2M95 420h2M489 420h2M102 421h2M109 421h2M491 421h2M500 421h2M100 422h2M98 423h2M106 423h2M487 423h2M494 423h2M111 424h2M489 424h2M496 424h2M103 425h2M498 425h2M108 426h2M485 426h2M492 426h2M100 427h2M494 427h2M105 428h2M488 428h2M496 428h2M102 430h2M491 430h2M115 431h2M494 432h2M482 433h2M111 434h2M118 434h2M115 436h2M478 436h2M107 437h2M112 438h2M119 438h2M488 438h2M476 439h2M482 439h2M109 440h2M121 441h2M480 442h2M486 442h2M113 443h2M474 443h2M484 445h2M115 446h2M480 448h2M469 449h2M123 450h2M129 450h2M475 454h2M123 455h2M470 455h2M129 456h2"/>
<path stroke="#7f7f7f" transform="translate(.5 0)" d="M73 372v1M77 325v1M78 333v1M80 248v1M80 348v1M81 244v1M83 236v1M84 233v1M84 364v1M85 229v1M85 367v1M86 371v1M87 225v1M88 410v1M89 218v1M89 378v1M90 382v1M91 183v1M91 386v1M92 211v1M92 214v1M93 389v1M94 207v1M94 421v1M96 176v1M97 424v1M98 172v1M98 400v1M99 178v1M99 196v1M99 428v1M100 169v1M101 417v1M101 431v1M102 165v1M102 407v1M102 426v1M104 181v1M104 190v1M104 420v1M104 429v1M105 167v1M105 176v1M105 424v1M106 414v1M106 438v1M107 173v1M107 427v1M108 159v1M108 169v1M108 422v1M108 441v1M109 417v1M109 436v1M110 155v1M110 425v1M110 435v1M111 161v1M111 171v1M111 420v1M111 439v1M111 445v1M112 152v1M112 162v1M112 444v1M113 157v1M113 163v1M113 423v1M113 433v1M113 448v1M114 158v1M114 164v1M114 432v1M114 437v1M114 447v1M115 148v1M115 154v1M115 442v1M116 149v1M116 155v1M116 441v1M117 160v1M117 166v1M117 435v1M117 440v1M117 445v1M118 161v1M118 439v1M118 444v1M119 151v1M119 157v1M119 443v1M119 454v1M120 142v1M120 152v1M120 158v1M120 433v1M120 442v1M120 453v1M121 143v1M121 153v1M121 437v1M121 452v1M121 457v1M122 154v1M122 436v1M122 451v1M122 456v1M123 139v1M123 440v1M124 140v1M124 145v1M124 461v1M125 141v1M125 146v1M125 156v1M125 380v1M125 449v1M125 454v1M125 460v1M126 136v1M126 142v1M126 147v1M126 157v1M126 448v1M126 453v1M126 459v1M127 137v1M127 148v1M127 379v1M127 447v1M127 452v1M127 458v1M127 464v1M128 138v1M128 446v1M128 451v1M128 457v1M128 463v1M129 133v1M129 139v1M129 144v1M129 378v1M129 462v1M130 134v1M130 140v1M130 145v1M130 150v1M130 461v1M131 135v1M131 141v1M131 146v1M131 204v1M131 377v1M131 449v1M131 455v1M131 460v1M132 136v1M132 142v1M132 147v1M132 454v1M132 459v1M133 137v1M133 143v1M133 148v1M133 205v1M133 376v1M133 453v1M133 458v1M133 469v1M134 127v1M134 138v1M134 144v1M134 452v1M134 457v1M134 468v1M135 128v1M135 139v1M135 145v1M135 206v1M135 375v1M135 456v1M135 467v1M136 129v1M136 140v1M136 455v1M136 466v1M136 472v1M137 124v1M137 130v1M137 141v1M137 207v1M137 374v1M137 465v1M137 471v1M138 125v1M138 131v1M138 142v1M138 464v1M138 470v1M139 126v1M139 132v1M139 143v1M139 209v1M139 373v1M139 463v1M139 469v1M139 475v1M140 127v1M140 133v1M140 462v1M140 468v1M140 474v1M141 121v1M141 128v1M141 134v1M141 210v1M141 372v1M141 461v1M141 467v1M141 473v1M142 122v1M142 129v2M142 135v1M142 460v1M142 466v1M142 472v1M142 478v1M143 123v2M143 131v1M143 136v1M143 211v1M143 371v1M143 459v1M143 465v1M143 470v2M143 477v1M144 119v1M144 125v1M144 132v1M144 464v1M144 469v1M144 475v2M145 120v1M145 126v1M145 133v1M145 212v1M145 370v1M145 463v1M145 468v1M145 474v1M146 121v1M146 127v1M146 134v1M146 467v1M146 473v1M147 122v1M147 128v1M147 213v1M147 369v1M147 466v1M147 472v1M148 123v2M148 129v2M148 465v1M148 471v1M148 483v1M149 125v1M149 131v1M149 214v1M149 368v1M149 469v2M149 482v1M150 113v1M150 126v1M150 468v1M150 480v2M151 114v1M151 127v1M151 215v1M151 368v1M151 479v1M152 115v2M152 128v1M152 478v1M152 486v1M153 111v1M153 117v1M153 216v1M153 367v1M153 477v1M153 484v2M154 112v1M154 118v1M154 476v1M154 483v1M155 113v2M155 119v1M155 218v1M155 366v1M155 474v2M155 482v1M155 488v1M156 115v1M156 120v1M156 473v1M156 480v2M156 486v2M157 108v1M157 116v1M157 121v2M157 219v1M157 365v1M157 472v1M157 479v1M157 485v1M158 109v2M158 117v1M158 123v1M158 478v1M158 484v1M159 111v1M159 118v1M159 220v1M159 364v1M159 476v2M159 482v2M159 490v1M160 106v1M160 112v2M160 119v2M160 481v1M160 488v2M161 107v2M161 114v1M161 121v1M161 221v1M161 363v1M161 480v1M161 487v1M162 109v1M162 115v2M162 122v1M162 478v2M162 486v1M163 110v1M163 117v1M163 222v1M163 362v1M163 485v1M164 111v2M164 118v2M164 484v1M165 113v1M165 120v1M165 223v1M165 361v1M165 482v2M165 496v1M166 114v1M166 481v1M166 494v2M167 101v1M167 115v2M167 224v1M167 360v1M167 493v1M168 102v2M168 491v2M169 104v1M169 225v1M169 359v1M169 490v1M169 498v1M170 99v1M170 105v2M170 488v2M170 496v2M171 100v2M171 107v1M171 227v1M171 358v1M171 487v1M171 494v2M172 102v1M172 108v2M172 485v2M172 492v2M172 500v1M173 103v2M173 110v1M173 228v1M173 357v1M173 491v1M173 498v2M174 97v1M174 105v1M174 111v2M174 489v2M174 496v2M175 98v2M175 106v2M175 113v1M175 229v1M175 356v1M175 487v2M175 494v2M176 100v2M176 108v1M176 493v1M176 502v1M177 94v1M177 102v2M177 109v2M177 230v1M177 355v1M177 491v2M177 500v2M178 95v2M178 104v1M178 111v1M178 489v2M178 499v1M179 97v2M179 105v2M179 231v1M179 355v1M179 497v2M180 99v2M180 107v2M180 495v2M181 101v1M181 109v1M181 232v1M181 354v1M181 494v1M182 102v2M182 492v2M183 104v2M183 233v1M183 353v1M183 453v1M183 507v1M184 106v1M184 505v2M185 90v2M185 235v1M185 352v1M185 451v1M185 503v2M186 92v2M186 449v1M186 501v2M187 94v2M187 351v1M187 499v2M187 507v2M188 88v1M188 96v2M188 447v1M188 497v2M188 505v2M189 89v2M189 98v2M189 237v1M189 350v1M189 445v1M189 495v2M189 503v2M190 91v2M190 100v2M190 494v1M190 501v2M190 510v2M191 93v2M191 102v1M191 238v1M191 349v1M191 443v1M191 499v2M191 508v2M192 86v2M192 95v2M192 441v1M192 497v2M192 506v2M193 88v2M193 97v2M193 348v1M193 504v2M194 90v2M194 99v2M194 439v1M194 502v2M194 511v2M195 92v2M195 240v1M195 347v1M195 437v1M195 500v2M195 509v2M196 85v2M196 94v2M196 499v1M196 507v2M197 87v2M197 96v2M197 241v1M197 346v1M197 435v1M197 505v2M198 89v2M198 98v1M198 433v1M198 503v2M199 91v2M199 242v1M199 345v1M199 501v2M200 93v2M200 431v1M201 95v2M201 244v1M201 344v1M201 429v1M201 515v2M202 513v2M203 81v2M203 245v1M203 343v1M203 427v1M203 511v2M204 83v2M204 425v1M204 509v2M205 85v2M205 246v1M205 343v1M205 507v2M205 517v2M206 87v2M206 423v1M206 505v2M206 515v2M207 80v2M207 89v2M207 129v1M207 247v1M207 342v1M207 421v1M207 504v1M207 513v2M208 82v2M208 91v2M208 131v1M208 511v2M209 84v3M209 93v1M209 133v1M209 248v1M209 419v1M209 509v2M209 518v2M210 87v2M210 135v1M210 417v1M210 507v2M210 516v2M211 78v2M211 89v2M211 137v1M211 340v1M211 506v1M211 513v3M212 80v2M212 91v1M212 139v1M212 415v1M212 510v3M213 82v3M213 141v1M213 250v1M213 339v1M213 413v1M213 508v2M213 520v2M214 85v3M214 443v1M214 506v1M214 518v2M215 76v2M215 88v2M215 143v1M215 251v1M215 338v1M215 411v1M215 441v2M215 515v3M216 78v3M216 90v1M216 145v1M216 409v1M216 439v2M216 512v3M217 81v3M217 147v1M217 253v1M217 337v1M217 438v1M217 510v2M218 84v2M218 149v1M218 407v1M218 436v2M218 509v1M219 86v3M219 151v1M219 254v1M219 336v1M219 405v1M219 434v2M220 89v1M220 153v1M220 433v1M221 155v1M221 255v1M221 335v1M221 403v1M221 523v2M222 74v2M222 157v1M222 401v1M222 519v4M223 76v2M223 159v1M223 256v1M223 334v1M223 516v3M224 78v3M224 161v1M224 399v1M224 512v4M224 524v2M225 81v3M225 163v1M225 257v1M225 333v1M225 397v1M225 511v1M225 522v2M226 73v1M226 84v2M226 165v1M226 519v3M227 74v3M227 86v1M227 258v1M227 332v1M227 395v1M227 516v3M228 77v3M228 167v1M228 393v1M228 514v2M228 525v2M229 80v2M229 169v1M229 259v1M229 331v1M229 513v1M229 523v2M230 71v2M230 82v3M230 171v1M230 391v1M230 520v3M231 73v4M231 85v1M231 173v1M231 261v1M231 330v1M231 389v1M231 517v3M232 77v3M232 175v1M232 515v2M232 526v2M233 80v4M233 177v1M233 262v1M233 330v1M233 387v1M233 514v1M233 523v3M234 70v2M234 84v1M234 179v1M234 385v1M234 519v4M235 72v3M235 181v1M235 263v1M235 329v1M235 516v3M236 75v4M236 183v1M236 383v1M236 515v1M237 79v3M237 185v1M237 264v1M237 328v1M237 381v1M238 82v2M238 187v1M239 189v1M239 265v1M239 327v1M239 379v1M240 377v1M240 529v2M241 191v1M241 266v1M241 326v1M241 525v4M242 68v2M242 193v1M242 375v1M242 522v3M243 70v3M243 195v1M243 267v1M243 325v1M243 373v1M243 518v4M244 73v4M244 197v1M244 517v1M244 530v2M245 77v3M245 199v1M245 268v1M245 324v1M245 371v1M245 526v4M246 67v2M246 80v2M246 201v1M246 523v3M247 69v4M247 203v1M247 270v1M247 323v1M247 519v4M248 73v3M248 205v1M248 367v1M248 518v1M249 76v4M249 207v1M249 271v1M249 322v1M249 365v1M249 529v4M250 80v1M250 209v1M250 522v7M251 66v4M251 272v1M251 321v1M251 363v1M251 519v3M252 70v7M252 213v1M252 361v1M253 77v3M253 273v1M253 320v1M253 529v4M254 215v1M254 359v1M254 523v6M255 65v4M255 217v1M255 274v1M255 319v1M255 357v1M255 520v3M256 69v7M256 219v1M257 76v3M257 221v1M257 275v1M257 318v1M257 355v1M258 223v1M258 353v1M259 225v1M259 276v1M259 318v1M260 227v1M260 351v1M261 229v1M261 278v1M261 317v1M261 349v1M261 531v4M262 231v1M262 524v7M263 64v4M263 233v1M263 279v1M263 316v1M263 347v1M263 521v3M264 68v7M264 235v1M264 345v1M265 75v2M265 78v1M265 237v1M265 280v1M265 315v1M265 532v4M266 343v1M266 525v7M267 63v4M267 239v1M267 281v1M267 314v1M267 341v1M267 522v3M268 67v7M268 241v1M269 74v3M269 243v1M269 282v1M269 313v1M269 339v1M269 532v4M270 245v1M270 337v1M270 525v7M271 63v4M271 247v1M271 283v1M271 312v1M271 461v4M271 522v3M272 67v7M272 249v1M272 335v1M272 455v6M273 74v2M273 77v1M273 251v1M273 284v1M273 311v1M273 333v1M273 452v3M273 533v4M274 253v1M274 526v7M275 62v4M275 255v1M275 285v1M275 310v1M275 331v1M275 523v3M276 66v7M276 257v1M276 329v1M277 73v3M277 259v1M277 287v1M277 309v1M278 261v1M278 327v1M279 288v1M279 308v1M279 325v1M280 263v1M281 265v1M281 289v1M281 307v1M281 323v1M281 529v8M282 267v1M282 321v1M282 523v6M283 62v7M283 269v1M283 290v1M283 306v1M284 69v7M284 271v1M284 319v1M285 273v1M285 291v1M285 305v1M285 317v1M286 275v1M286 523v14M287 277v1M287 292v1M287 305v1M287 315v1M288 61v14M288 279v1M288 313v1M289 281v1M289 293v1M289 304v1M290 283v1M290 311v1M290 524v14M291 285v1M291 294v1M291 303v1M291 309v1M292 61v14M293 287v1M293 296v1M293 302v1M293 307v1M294 289v1M294 305v1M294 524v14M295 291v1M295 297v1M295 301v1M296 61v14M296 293v1M296 303v1M297 295v1M297 298v1M297 300v2M298 297v1M299 299v1M300 301v1M301 297v2M301 300v1M301 303v1M302 295v1M302 305v1M302 524v14M303 297v1M303 301v1M303 307v1M304 61v14M304 293v1M304 309v1M305 291v1M305 296v1M305 302v1M305 311v1M306 524v14M307 289v1M307 295v1M307 304v1M307 313v1M308 61v14M308 287v1M308 315v1M309 294v1M309 305v1M309 317v1M310 285v1M310 319v1M310 524v14M311 283v1M311 293v1M311 306v1M311 321v1M312 62v14M312 323v1M313 281v1M313 293v1M313 307v1M313 325v1M314 279v1M314 327v1M314 523v7M315 292v1M315 308v1M315 329v1M315 530v7M316 70v6M316 277v1M316 331v1M317 62v8M317 275v1M317 291v1M317 309v1M317 333v1M318 335v1M319 273v1M319 290v1M319 310v1M320 271v1M320 337v1M321 289v1M321 311v1M321 339v1M321 523v3M322 269v1M322 341v1M322 526v7M323 73v3M323 267v1M323 288v1M323 313v1M323 343v1M323 533v4M324 66v7M324 345v1M325 62v4M325 265v1M325 287v1M325 314v1M325 347v1M325 521v1M325 523v2M326 263v1M326 349v1M326 525v7M327 74v3M327 286v1M327 315v1M327 351v1M327 532v4M328 67v7M328 261v1M328 353v1M329 63v4M329 259v1M329 285v1M329 316v1M329 355v1M329 522v3M330 357v1M330 525v7M331 74v3M331 257v1M331 284v1M331 317v1M331 359v1M331 532v4M332 67v7M332 255v1M333 63v4M333 283v1M333 318v1M333 361v1M333 520v1M333 522v2M334 253v1M334 363v1M334 524v7M335 75v3M335 251v1M335 282v1M335 319v1M335 365v1M335 531v4M336 68v7M336 367v1M337 64v4M337 249v1M337 281v1M337 320v1M337 369v1M338 247v1M338 371v1M339 280v1M339 322v1M339 373v1M340 245v1M340 375v1M341 243v1M341 280v1M341 323v1M341 377v1M341 520v3M342 379v1M342 523v7M343 76v3M343 241v1M343 279v1M343 324v1M343 381v1M343 530v4M344 70v6M344 239v1M344 383v1M345 66v4M345 278v1M345 325v1M345 519v3M346 237v1M346 385v1M346 522v7M347 77v3M347 235v1M347 277v1M347 326v1M347 387v1M347 529v4M348 70v7M348 389v1M348 518v1M349 66v4M349 233v1M349 276v1M349 327v1M349 391v1M349 519v4M350 80v1M350 231v1M350 393v1M350 523v3M351 76v4M351 275v1M351 328v1M351 395v1M351 526v4M352 73v3M352 229v1M352 397v1M352 517v2M352 530v2M353 69v4M353 227v1M353 274v1M353 330v1M353 399v1M353 519v3M354 67v2M354 81v1M354 401v1M354 522v4M355 77v4M355 225v1M355 273v1M355 331v1M355 403v1M355 526v3M356 74v3M356 223v1M356 405v1M356 529v2M357 70v4M357 272v1M357 332v1M357 407v1M358 68v2M358 221v1M359 219v1M359 271v1M359 333v1M359 409v1M360 411v1M360 515v2M361 217v1M361 270v1M361 334v1M361 413v1M361 517v3M362 83v1M362 215v1M362 415v1M362 520v4M363 80v3M363 269v1M363 335v1M363 417v1M363 524v3M364 76v4M364 213v1M364 419v1M364 514v1M364 527v2M365 73v3M365 84v1M365 211v1M365 268v1M365 336v1M365 421v1M365 515v4M366 71v2M366 82v2M366 423v1M366 519v3M367 79v3M367 209v1M367 268v1M367 337v1M367 425v1M367 513v1M367 522v4M368 76v3M368 207v1M368 427v1M368 514v3M368 526v2M369 74v2M369 85v1M369 267v1M369 339v1M369 429v1M369 517v2M370 72v2M370 83v2M370 205v1M370 431v1M370 519v3M371 80v3M371 203v1M371 266v1M371 512v1M371 522v3M372 77v3M372 433v1M372 513v2M372 525v1M373 75v2M373 87v1M373 201v1M373 265v1M373 341v1M373 435v1M373 515v3M374 73v2M374 83v4M374 199v1M374 437v1M374 518v3M375 80v3M375 264v1M375 342v1M375 439v1M375 521v2M376 76v4M376 197v1M376 441v1M376 523v2M377 74v2M377 195v1M377 263v1M377 343v1M377 443v1M378 445v1M378 509v1M379 193v1M379 262v1M379 344v1M379 447v1M379 510v3M380 89v1M380 191v1M380 449v1M380 513v2M381 87v2M381 261v1M381 345v1M381 451v1M381 515v3M382 84v3M382 189v1M382 453v1M382 508v1M382 518v3M383 81v3M383 187v1M383 260v1M383 347v1M383 455v1M383 509v2M383 521v2M384 79v2M384 92v1M384 511v3M385 77v2M385 89v2M385 185v1M385 259v1M385 348v1M385 457v1M385 514v3M386 86v3M386 183v1M386 428v1M386 459v1M386 507v1M386 517v2M387 83v3M387 92v1M387 258v1M387 349v1M387 429v2M387 461v1M387 508v2M387 519v2M388 81v2M388 90v2M388 181v1M388 431v2M388 463v1M388 510v2M389 79v2M389 88v2M389 179v1M389 257v1M389 350v1M389 433v1M389 465v1M389 505v1M389 512v3M390 86v2M390 434v2M390 467v1M390 506v2M390 515v2M391 84v2M391 94v1M391 177v1M391 256v1M391 351v1M391 436v2M391 469v1M391 508v2M391 517v2M392 82v2M392 92v2M392 175v1M392 438v1M392 510v2M393 80v2M393 90v2M393 255v1M393 352v1M393 512v2M394 88v2M394 173v1M394 514v2M395 86v2M395 171v1M395 255v1M395 353v1M395 516v2M396 84v2M397 82v2M397 169v1M397 254v1M397 354v1M397 502v2M398 167v1M398 504v2M399 96v2M399 253v1M399 356v1M399 506v2M400 94v2M400 165v1M400 500v1M400 508v2M401 92v2M401 163v1M401 252v1M401 357v1M401 501v2M401 510v2M402 90v2M402 99v1M402 503v2M402 512v2M403 88v2M403 97v2M403 161v1M403 358v1M403 505v2M404 86v2M404 95v2M404 159v1M404 498v2M404 507v2M405 93v2M405 250v1M405 359v1M405 500v2M405 509v2M406 91v2M406 100v2M406 157v1M406 502v2M406 511v2M407 89v2M407 98v2M407 155v1M407 360v1M407 496v1M407 504v2M408 87v2M408 96v2M408 104v1M408 497v2M408 506v2M409 94v2M409 102v2M409 153v1M409 248v1M409 361v1M409 499v2M409 508v2M410 92v2M410 100v2M410 151v1M410 501v2M410 510v1M411 90v2M411 98v2M411 247v1M411 362v1M411 503v2M412 96v2M412 149v1M412 505v2M413 94v2M413 147v1M413 363v1M413 405v1M413 507v2M414 92v2M414 406v1M414 492v1M415 91v1M415 145v1M415 245v1M415 365v1M415 407v1M415 493v2M416 105v2M416 408v1M416 495v2M417 104v1M417 244v1M417 366v1M417 409v2M417 489v1M417 497v1M418 102v2M418 411v1M418 490v2M418 498v2M419 100v2M419 243v1M419 367v1M419 412v1M419 492v2M419 500v2M420 99v1M420 108v2M420 413v1M420 487v1M420 494v1M420 502v2M421 97v2M421 106v2M421 243v1M421 368v1M421 414v1M421 488v2M421 495v2M421 504v1M422 96v1M422 105v1M422 490v1M422 497v2M423 103v2M423 110v2M423 242v1M423 369v1M423 485v1M423 491v2M423 499v2M424 101v2M424 108v2M424 486v2M424 493v1M424 501v1M425 99v2M425 107v1M425 241v1M425 370v1M425 488v1M425 494v2M426 98v1M426 105v2M426 112v2M426 489v2M426 496v1M427 103v2M427 111v1M427 240v1M427 371v1M427 491v1M427 497v2M428 101v2M428 109v2M428 492v2M428 499v1M429 100v1M429 108v1M429 239v1M429 373v1M429 494v1M430 106v2M430 495v2M431 105v1M431 238v1M431 374v1M431 482v2M431 497v1M432 103v2M432 117v1M432 484v1M433 102v1M433 115v2M433 237v1M433 375v1M433 478v1M433 485v1M434 114v1M434 479v2M434 486v2M435 113v1M435 236v1M435 376v1M435 481v1M435 488v1M436 112v1M436 119v2M436 476v1M436 482v2M436 489v1M437 111v1M437 118v1M437 235v1M437 377v1M437 477v1M437 484v1M437 490v2M438 109v2M438 117v1M438 478v2M438 485v2M438 492v1M439 108v1M439 115v2M439 121v2M439 234v1M439 378v1M439 480v1M439 487v1M440 114v1M440 120v1M440 475v1M440 481v1M440 488v2M441 113v1M441 119v1M441 126v1M441 233v1M441 379v1M441 476v2M441 482v1M441 490v1M442 111v2M442 117v2M442 125v1M442 478v1M442 483v1M443 110v1M443 116v1M443 123v2M443 232v1M443 380v1M443 479v1M443 484v2M444 115v1M444 122v1M444 480v1M444 486v1M445 113v2M445 121v1M445 231v1M445 382v1M445 481v1M445 487v1M446 112v1M446 120v1M446 470v1M446 482v2M447 119v1M447 230v1M447 383v1M447 471v1M447 484v1M448 117v2M448 130v1M448 472v1M448 485v1M449 116v1M449 128v2M449 230v1M449 384v1M449 467v1M449 473v1M450 115v1M450 127v1M450 133v1M450 468v2M450 474v2M451 126v1M451 132v1M451 229v1M451 385v1M451 470v1M451 476v1M452 125v1M452 131v1M452 464v1M452 471v1M452 477v1M453 124v1M453 130v1M453 135v1M453 228v1M453 386v1M453 465v1M453 472v1M453 478v1M454 122v2M454 129v1M454 134v1M454 466v1M454 473v1M454 479v1M455 121v1M455 127v2M455 133v1M455 139v1M455 227v1M455 387v1M455 462v1M455 467v1M455 474v2M456 120v1M456 126v1M456 132v1M456 138v1M456 463v1M456 468v2M456 476v1M457 125v1M457 131v1M457 137v1M457 226v1M457 388v1M457 464v1M457 470v1M457 477v1M458 124v1M458 130v1M458 136v1M458 465v1M458 471v1M459 123v1M459 129v1M459 135v1M459 225v1M459 389v1M459 455v1M459 466v1M459 472v1M460 128v1M460 134v1M460 456v1M460 467v1M460 473v1M461 127v1M461 133v1M461 224v1M461 391v1M461 457v1M461 468v1M461 474v1M462 126v1M462 132v1M462 143v1M462 458v1M462 469v1M463 131v1M463 142v1M463 223v1M463 392v1M463 453v1M463 459v1M463 470v1M464 130v1M464 141v1M464 146v1M464 454v1M464 460v1M464 471v1M465 129v1M465 140v1M465 145v1M465 222v1M465 393v1M465 450v1M465 455v1M465 461v1M466 139v1M466 144v1M466 451v1M466 456v1M466 462v1M467 138v1M467 143v1M467 149v1M467 221v1M467 394v1M467 452v1M467 457v1M467 463v1M468 137v1M468 448v1M468 453v1M468 458v1M468 464v1M469 136v1M469 220v1M469 454v1M469 459v1M469 465v1M470 135v1M470 141v1M470 147v1M470 152v1M470 460v1M471 134v1M471 140v1M471 146v1M471 151v1M471 219v1M471 450v1M471 461v1M472 139v1M472 145v1M472 150v1M472 441v1M472 451v1M472 456v1M472 462v1M473 138v1M473 144v1M473 149v1M473 218v1M473 442v1M473 452v1M473 457v1M474 137v1M474 453v1M474 458v1M475 158v1M475 459v1M476 142v1M476 147v1M476 162v1M476 444v1M477 141v1M477 146v1M477 161v1M477 445v1M477 455v1M478 145v1M478 156v1M478 165v1M478 440v1M478 446v1M478 456v1M479 144v1M479 155v1M479 441v1M479 447v1M480 154v1M480 159v1M480 437v1M481 153v1M481 158v1M481 163v1M481 432v1M481 438v1M482 157v1M482 443v1M482 449v1M483 156v1M483 444v1M483 450v1M484 151v1M484 161v1M484 166v1M484 434v1M484 440v1M485 150v1M485 165v1M485 175v1M485 435v1M485 441v1M486 154v1M486 436v1M486 446v1M487 153v1M487 159v1M487 178v1M487 427v1M487 437v1M488 163v1M488 173v1M488 443v1M489 162v1M489 181v1M490 157v1M490 176v1M490 429v1M490 439v1M491 171v1M491 425v1M492 160v1M492 184v1M493 174v1M493 422v1M493 431v1M494 169v1M494 178v1M494 408v1M494 417v1M496 172v1M496 191v1M496 433v1M497 167v1M497 181v1M498 429v1M499 170v1M499 402v1M499 420v1M500 198v1M500 426v1M501 174v1M502 422v1M504 177v1M504 391v1M505 209v1M506 384v1M506 387v1M507 212v1M507 415v1M508 216v1M509 220v1M509 380v1M510 188v1M511 373v1M512 227v1M513 231v1M513 369v1M514 234v1M514 365v1M515 362v1M517 354v1M518 250v1M518 350v1M520 265v1M521 273v1M525 226v1"/>
<path stroke="#ff0000" transform="translate(0 .5)" d="M383 45h3M393 45h3M388 53h3M747 106h3M326 114h5M324 115h2M331 115h2M324 129h2M331 129h2M326 130h5M750 146h3M751 147h2M163 177h6M167 178h2M155 183h5M160 184h2M744 190h9M155 193h5M445 196h2M444 208h15M747 236h3M745 237h2M750 237h2M745 243h2M750 243h2M747 244h3M193 263h3M403 263h2M403 265h2M403 267h2M182 274h2M402 275h2M750 276h3M402 277h2M751 277h2M402 279h2M746 279h2M402 281h2M746 284h2M170 285h2M745 287h2M403 289h2M403 291h2M745 293h8M402 299h2M402 301h2M402 303h2M38 335h5M388 365h2M387 371h2M386 375h2M386 377h2M385 381h2M385 383h2M384 385h2M384 387h2M384 389h2M383 391h2M383 393h2M383 395h2M382 397h2M382 399h2M381 403h2M381 405h2M380 409h2M379 415h2M471 493h5M474 494h2"/>
<path stroke="#ff0000" transform="translate(.5 0)" d="M32 347v1M33 348v1M34 339v5M34 349v1M35 338v1M35 344v1M35 348v1M36 337v1M36 345v3M37 336v1M43 336v1M44 337v1M44 345v3M45 338v1M45 344v1M45 348v1M46 339v5M46 349v1M47 350v1M48 351v1M150 299v1M152 186v5M153 185v1M153 191v1M154 184v1M154 192v1M155 299v1M158 296v1M159 295v1M160 192v1M161 184v2M161 191v1M161 293v1M162 183v1M162 186v5M163 182v1M163 292v1M164 181v1M164 291v1M165 180v1M166 179v1M167 288v1M168 177v6M173 282v1M175 281v1M176 280v1M178 211v1M179 277v2M183 222v1M184 218v1M184 221v1M184 225v1M185 224v1M185 227v2M185 231v1M185 271v1M186 230v1M186 234v1M186 237v1M187 233v1M187 236v1M187 240v1M187 270v1M188 239v1M188 243v1M188 246v1M188 269v1M189 242v1M189 245v1M189 249v1M190 248v1M190 251v2M190 255v1M191 254v1M191 258v1M191 266v2M192 257v1M192 260v2M192 264v1M193 267v1M193 270v1M194 266v1M194 269v1M194 273v1M195 272v1M195 275v2M195 279v1M196 278v1M196 282v1M197 260v1M197 281v1M197 284v2M197 288v1M198 287v1M198 291v1M199 260v1M199 290v1M199 293v2M199 297v1M200 258v1M200 296v1M200 299v2M200 303v1M201 302v1M201 306v1M202 305v1M202 308v2M202 312v1M203 255v2M203 311v1M203 314v2M204 317v2M204 321v1M205 320v1M205 323v2M206 252v1M206 326v2M206 330v1M207 253v1M207 329v1M207 332v2M208 335v2M208 338v2M209 249v1M209 341v2M209 345v1M210 344v1M210 347v2M211 249v1M211 350v2M211 354v1M212 247v1M212 353v1M212 356v2M213 359v2M213 362v2M214 365v2M215 244v2M215 368v2M215 371v2M216 374v2M216 377v2M217 380v2M218 241v1M218 383v2M218 386v2M219 242v1M219 389v2M220 392v2M220 395v2M221 238v1M221 398v2M221 401v1M222 402v1M222 404v2M223 238v1M223 407v2M223 410v2M224 236v1M224 413v2M225 416v2M225 419v2M226 422v2M227 233v1M227 235v1M230 230v1M231 231v1M233 227v1M235 228v1M236 225v1M239 222v1M239 224v1M242 219v1M243 220v1M245 216v1M247 217v1M248 214v1M251 211v1M251 213v1M254 208v1M255 210v1M257 205v1M259 206v1M260 203v1M263 200v1M263 202v1M266 197v1M267 199v1M269 194v1M271 195v1M272 192v1M275 189v1M275 192v1M278 186v1M279 188v1M281 183v1M283 185v1M284 181v1M287 178v1M287 181v1M290 175v1M291 177v1M293 172v1M295 174v1M296 170v1M299 167v1M299 170v1M302 164v1M303 167v1M307 163v1M311 160v1M316 150v1M320 120v5M321 118v2M321 125v2M322 117v1M322 127v1M323 116v1M323 128v1M328 122v1M333 116v1M333 128v1M334 117v1M334 127v1M335 118v2M335 125v2M336 120v5M379 417v1M380 411v5M381 47v3M381 405v6M382 46v1M382 50v1M382 401v5M383 51v1M383 395v6M384 389v7M385 379v1M385 385v5M386 46v1M386 373v1M386 380v5M387 47v3M387 367v1M387 369v1M387 375v5M388 50v4M388 361v1M388 363v1M388 370v5M389 53v9M389 355v1M389 357v1M389 359v1M389 365v5M390 50v4M390 349v1M390 351v1M390 353v1M390 360v5M391 47v3M391 343v1M391 345v1M391 347v1M391 355v5M392 46v1M392 337v1M392 339v1M392 341v1M392 350v5M393 331v1M393 333v1M393 335v1M393 345v5M394 325v1M394 327v1M394 329v1M394 339v6M395 51v1M395 319v1M395 321v1M395 323v1M395 334v5M396 46v1M396 50v1M396 313v1M396 315v1M396 317v1M396 329v5M397 47v3M397 307v1M397 309v1M397 311v1M397 324v5M398 301v1M398 303v1M398 305v1M398 319v5M399 295v1M399 297v1M399 299v1M399 314v5M400 289v1M400 291v1M400 293v1M400 309v5M401 283v1M401 285v1M401 287v1M401 304v5M402 201v1M402 203v1M402 205v1M402 207v1M402 209v1M402 211v1M402 213v1M402 215v1M402 217v1M402 219v1M402 221v1M402 223v1M402 225v1M402 227v1M402 229v1M402 231v1M402 233v1M402 235v1M402 237v1M402 239v1M402 241v1M402 243v1M402 245v1M402 247v1M402 299v5M403 249v1M403 251v1M403 253v1M403 255v1M403 257v1M403 259v1M403 261v1M403 269v1M403 271v1M403 273v1M403 283v1M403 285v1M403 287v1M403 293v7M403 305v1M403 307v1M403 309v1M403 311v1M403 313v1M403 315v1M403 317v1M403 319v1M403 321v1M403 323v1M403 325v1M403 327v1M403 329v1M403 331v1M403 333v1M403 335v1M403 337v1M403 339v1M403 341v1M403 343v1M403 345v1M403 347v1M404 288v5M404 349v1M404 351v1M404 353v1M404 355v1M404 357v1M404 359v1M404 361v1M404 363v1M404 365v1M404 367v1M404 369v1M404 371v1M404 373v1M404 375v1M404 377v1M404 379v1M404 381v1M404 383v1M404 385v1M404 387v1M404 389v1M404 391v1M404 393v1M404 395v1M404 397v1M405 257v1M405 259v1M405 261v1M405 283v5M406 251v1M406 253v1M406 255v1M406 278v5M407 245v1M407 247v1M407 249v1M407 273v5M408 239v1M408 241v1M408 243v1M408 268v5M409 233v1M409 235v1M409 237v1M409 263v5M410 227v1M410 229v1M410 231v1M410 258v5M411 221v1M411 223v1M411 225v1M411 253v5M412 215v1M412 217v1M412 219v1M412 248v5M413 213v1M413 242v6M414 237v5M415 232v5M416 227v5M417 222v5M418 220v2M423 216v1M444 207v2M445 205v2M446 203v2M447 197v1M447 201v2M448 198v3M454 196v15M455 195v1M456 194v1M459 509v1M460 508v1M461 499v1M461 507v1M462 500v1M462 506v1M463 501v1M463 505v1M464 502v1M464 504v1M465 503v1M466 502v1M466 504v1M467 501v1M467 505v1M468 500v1M468 506v1M469 499v1M469 507v1M470 498v1M471 497v1M472 496v1M473 495v1M475 493v5M744 112v1M744 154v1M744 186v1M744 194v1M744 239v3M744 281v2M745 108v3M745 113v1M745 149v1M745 153v1M745 187v1M745 193v1M745 237v2M745 242v2M745 280v1M745 283v1M745 292v2M746 107v1M746 111v2M746 150v1M746 152v1M746 188v5M746 290v2M747 151v1M747 288v2M748 150v1M748 152v1M748 240v1M748 280v1M748 283v1M749 149v1M749 153v1M749 279v1M749 281v2M750 107v1M750 111v2M750 148v1M750 188v5M750 278v1M750 287v8M751 108v3M751 113v1M751 187v1M751 193v1M751 237v2M751 242v2M751 286v1M752 114v1M752 146v3M752 186v1M752 194v1M752 239v3M752 276v3"/>
<path stroke="#ffff00" transform="translate(0 .5)" d="M251 35h2M258 35h2M253 36h5M251 37h2M258 37h2M251 47h2M258 47h2M253 48h5M747 116h3M311 156h3M750 156h2M744 157h2M748 157h2M750 159h2M143 194h9M151 198h3M747 198h3M147 200h3M747 204h3M745 297h5M749 299h2M747 300h2M549 381h3M538 382h2M545 382h2M549 387h3M102 462h2M99 464h2"/>
<path stroke="#ffff00" transform="translate(.5 0)" d="M89 459v1M90 460v1M91 461v13M92 460v1M93 459v1M94 460v1M95 461v13M96 460v1M97 459v1M98 460v1M99 461v11M99 475v1M100 472v1M100 474v1M101 463v1M101 473v1M102 472v1M102 474v1M103 461v11M103 475v1M147 192v15M150 199v1M153 204v3M154 199v1M154 203v1M154 207v1M155 200v3M155 208v1M177 213v1M249 32v1M249 40v5M250 33v2M250 38v2M250 45v2M260 33v2M260 38v2M260 45v2M261 32v1M261 40v5M311 150v1M402 199v1M406 203v1M409 207v1M413 211v1M414 213v1M416 215v1M417 217v1M418 219v1M537 383v1M539 381v9M540 390v1M541 391v5M542 390v1M543 385v5M544 384v1M545 381v3M546 384v1M547 383v1M547 385v1M548 382v1M548 386v1M550 387v2M551 389v1M551 397v1M552 382v1M552 386v1M552 390v1M552 396v1M553 383v3M553 391v5M744 122v1M745 118v3M745 123v1M745 156v5M745 196v1M745 200v3M746 117v1M746 121v2M746 161v3M746 197v1M746 199v1M746 203v1M747 158v3M747 296v8M748 156v2M749 157v2M750 117v1M750 121v2M750 197v1M750 199v1M750 203v1M750 302v2M751 118v3M751 123v1M751 159v2M751 164v1M751 196v1M751 200v3M751 300v2M751 304v1M752 124v1M752 157v2M752 161v3"/>
<path stroke="#00ff00" transform="translate(0 .5)" d="M127 91h11M127 103h11M365 127h5M749 128h3M365 135h5M363 139h9M745 167h2M748 167h2M747 168h2M750 168h2M745 172h2M748 172h2M747 173h2M750 173h2M437 178h5M437 186h5M435 190h9M746 207h6M746 213h6M186 225h2M191 237h2M193 243h2M553 248h2M559 248h2M196 249h2M556 252h2M562 252h2M198 255h2M747 257h3M553 258h2M559 258h2M201 261h2M747 261h3M556 262h2M562 262h2M746 263h5M747 266h3M203 267h2M747 270h3M746 272h5M206 273h2M208 279h2M211 285h2M213 291h2M216 297h2M218 303h2M746 309h5M747 312h3M223 315h2M228 327h2M233 339h2M238 351h2M243 363h2M255 393h2M260 405h2M265 417h2M270 429h2M265 474h9M268 480h3M268 484h3M207 541h5M201 547h7M211 547h7M201 551h17"/>
<path stroke="#00ff00" transform="translate(.5 0)" d="M125 89v1M125 105v1M126 90v1M126 104v1M129 91v13M135 91v13M138 90v1M138 104v1M139 89v1M139 105v1M157 300v1M159 301v1M161 302v1M163 303v1M165 304v1M167 305v1M169 306v1M171 307v1M173 309v1M175 310v1M177 311v1M179 312v1M181 313v1M183 219v1M183 314v1M184 217v1M184 222v1M185 219v1M185 221v1M185 315v1M186 223v1M187 228v1M187 316v1M188 227v1M188 231v1M189 229v1M189 234v1M189 317v1M190 231v1M190 233v1M191 235v1M191 318v1M192 240v1M193 239v1M193 319v1M194 241v1M194 246v1M195 245v1M195 320v1M196 247v1M197 252v1M197 321v1M198 251v1M199 253v1M199 258v1M199 322v1M200 257v1M201 259v1M201 323v1M202 264v1M203 263v1M203 265v1M203 324v1M204 270v1M205 269v1M205 326v1M205 543v3M206 271v1M206 542v1M206 546v2M207 276v1M207 327v1M208 275v1M208 277v1M209 282v1M209 328v1M210 281v1M211 283v1M211 329v1M212 287v2M212 542v1M212 546v2M213 289v1M213 330v1M213 543v3M214 294v1M215 293v1M215 331v1M216 295v1M217 299v2M217 332v1M218 301v1M219 306v1M219 333v1M220 305v1M221 307v1M221 309v1M221 334v1M222 311v2M223 313v1M223 335v1M224 318v1M225 317v1M225 336v1M226 319v1M226 321v1M227 323v2M227 337v1M228 325v1M229 330v1M229 338v1M230 329v1M230 331v1M231 333v1M231 339v1M232 335v2M233 337v1M233 339v2M234 342v1M235 341v1M235 343v1M236 345v1M237 343v1M237 347v2M238 349v1M239 344v1M239 353v2M240 355v1M241 345v1M241 357v1M242 359v2M243 346v1M243 361v1M244 365v2M245 347v1M245 367v1M246 369v1M247 348v1M247 371v2M248 373v1M248 375v1M249 349v1M249 377v2M250 379v1M251 350v1M251 381v1M252 383v2M253 351v1M253 385v1M253 387v1M254 389v2M255 352v1M255 391v1M257 353v1M257 395v3M258 399v1M259 354v1M259 401v2M260 403v1M261 355v1M262 407v3M263 356v1M263 411v1M263 468v1M263 478v1M264 413v2M264 469v1M264 477v1M265 357v1M265 415v1M265 470v7M266 419v1M267 358v1M267 420v2M267 481v3M268 423v1M269 360v1M269 425v2M269 472v9M270 427v1M271 361v1M271 431v1M271 481v3M272 432v2M273 362v1M273 435v1M273 470v7M274 437v2M274 446v1M274 469v1M274 477v1M275 363v1M275 439v1M275 468v1M275 478v1M277 364v1M279 365v1M281 366v1M283 367v1M287 369v1M289 370v1M291 371v1M293 372v1M295 373v1M297 374v1M299 375v1M301 377v1M303 378v1M305 379v1M307 380v1M309 381v1M311 382v1M313 383v1M315 384v1M317 385v1M319 386v1M321 387v1M323 388v1M325 389v1M327 390v1M329 391v1M331 392v1M333 394v1M335 395v1M337 396v1M339 397v1M341 398v1M343 399v1M345 400v1M347 401v1M349 402v1M351 403v1M353 404v1M354 166v1M354 168v1M354 170v1M355 172v1M355 174v1M355 176v1M355 178v1M355 180v1M355 405v1M356 161v1M356 182v1M356 184v1M356 186v1M356 188v1M356 190v1M357 192v1M357 194v1M357 196v1M357 198v1M357 200v1M357 406v1M358 202v1M358 204v1M358 206v1M358 208v1M358 210v1M359 212v1M359 214v1M359 216v1M359 218v1M359 220v1M359 407v1M360 222v1M360 224v1M360 226v1M360 228v1M360 230v1M361 232v1M361 234v1M361 236v1M361 238v1M361 240v1M361 408v1M362 242v1M362 244v1M362 246v1M362 248v1M362 250v1M363 125v1M363 129v5M363 252v1M363 254v1M363 256v1M363 258v1M363 260v1M363 409v1M364 126v1M364 128v1M364 134v1M364 262v1M364 264v1M364 266v1M364 268v1M364 270v1M365 272v1M365 274v1M365 276v1M365 278v1M365 280v1M365 411v1M366 282v1M366 284v1M366 286v1M366 288v1M366 290v1M367 135v7M367 292v1M367 294v1M367 296v1M367 298v1M367 300v1M367 302v1M367 412v1M368 304v1M368 306v1M368 308v1M368 310v1M368 312v1M369 314v1M369 316v1M369 318v1M369 320v1M369 322v1M369 413v1M370 126v1M370 128v1M370 134v1M370 324v1M370 326v1M370 328v1M370 330v1M370 332v1M371 125v1M371 129v5M371 334v1M371 336v1M371 338v1M371 340v1M371 342v1M371 414v1M372 344v1M372 346v1M372 348v1M372 350v1M372 352v1M373 354v1M373 356v1M373 358v1M373 360v1M373 362v1M373 415v1M374 364v1M374 366v1M374 368v1M374 370v1M374 372v1M375 374v1M375 376v1M375 378v1M375 380v1M375 382v1M375 416v1M376 384v1M376 386v1M376 388v1M376 390v1M376 392v1M377 394v1M377 396v1M377 398v1M377 400v1M377 402v1M377 417v1M378 404v1M378 406v1M378 408v1M378 410v1M378 412v1M379 414v1M379 416v1M379 418v1M417 208v1M435 180v5M436 179v1M436 185v1M439 186v9M442 179v1M442 185v1M443 180v5M550 253v1M550 263v1M551 252v1M551 262v1M552 249v3M552 259v3M554 247v3M554 257v3M555 250v1M555 260v1M556 251v3M556 261v3M558 249v3M558 259v3M560 247v3M560 257v3M561 250v1M561 260v1M562 251v3M562 261v3M564 249v3M564 259v3M565 248v1M565 258v1M566 247v1M566 257v1M744 126v1M744 169v1M744 174v1M745 127v7M745 167v2M745 172v2M745 206v1M745 214v1M745 306v1M745 311v1M746 126v1M746 166v2M746 171v2M746 256v1M746 258v3M746 267v3M746 307v4M747 127v7M747 168v2M747 173v2M747 207v7M747 312v2M748 126v1M748 261v4M748 270v5M748 308v5M748 314v1M749 127v6M749 134v1M749 166v2M749 171v2M749 312v2M750 133v1M750 168v2M750 173v2M750 207v7M750 256v1M750 258v3M750 267v3M750 307v4M751 127v6M751 134v1M751 167v2M751 172v2M751 306v1M751 311v1M752 166v1M752 171v1M752 206v1M752 214v1"/>
<path stroke="#0000ff" transform="translate(0 .5)" d="M493 131h17M750 144h2M422 164h5M427 165h2M745 177h2M748 177h2M747 178h2M750 178h2M427 179h2M422 180h5M745 182h2M748 182h2M747 183h2M750 183h2M51 202h5M48 203h3M57 204h3M47 208h3M57 210h3M47 214h3M56 215h3M51 216h5M747 217h3M745 218h2M750 218h2M745 220h2M750 221h2M745 223h2M750 223h2M747 224h3M746 246h3M749 247h2M749 253h2M746 254h3M744 317h2M747 317h3M751 317h2M747 320h3M746 322h5M747 330h3M746 332h5M392 442h3M397 442h5M404 442h3M207 446h3M395 447h2M402 447h2M397 448h5M207 450h3M395 452h9M204 453h2M211 453h2M206 454h5M204 458h9M349 562h3M347 566h2"/>
<path stroke="#0000ff" transform="translate(.5 0)" d="M45 206v1M45 210v3M46 205v1M46 209v1M46 213v1M47 204v1M50 209v1M50 213v1M50 215v1M51 210v3M55 206v3M56 203v1M56 205v1M56 209v1M59 214v1M60 205v1M60 209v1M60 213v1M61 206v3M61 212v1M202 446v5M203 451v2M206 447v3M208 454v9M210 447v3M213 451v2M214 446v5M223 428v1M275 438v1M275 440v1M276 430v1M276 432v1M276 434v1M276 436v1M277 424v1M277 426v1M277 428v1M278 416v1M278 418v1M278 420v1M278 422v1M279 410v1M279 412v1M279 414v1M280 402v1M280 404v1M280 406v1M280 408v1M281 394v1M281 396v1M281 398v1M281 400v1M282 388v1M282 390v1M282 392v1M283 380v1M283 382v1M283 384v1M283 386v1M284 374v1M284 376v1M284 378v1M285 366v1M285 368v1M285 370v1M285 372v1M286 360v1M286 362v1M286 364v1M287 352v1M287 354v1M287 356v1M287 358v1M288 346v1M288 348v1M288 350v1M289 338v1M289 340v1M289 342v1M289 344v1M290 330v1M290 332v1M290 334v1M290 336v1M291 324v1M291 326v1M291 328v1M292 316v1M292 318v1M292 320v1M292 322v1M293 310v1M293 312v1M293 314v1M294 302v1M294 304v1M294 306v1M294 308v1M295 296v1M295 298v1M295 300v1M296 288v1M296 290v1M296 292v1M296 294v1M297 282v1M297 284v1M297 286v1M298 274v1M298 276v1M298 278v1M298 280v1M299 268v1M299 270v1M299 272v1M300 260v1M300 262v1M300 264v1M300 266v1M301 252v1M301 254v1M301 256v1M301 258v1M302 246v1M302 248v1M302 250v1M303 238v1M303 240v1M303 242v1M303 244v1M304 232v1M304 234v1M304 236v1M305 224v1M305 226v1M305 228v1M305 230v1M306 218v1M306 220v1M306 222v1M307 210v1M307 212v1M307 214v1M307 216v1M308 204v1M308 206v1M308 208v1M309 196v1M309 198v1M309 200v1M309 202v1M310 188v1M310 190v1M310 192v1M310 194v1M311 182v1M311 184v1M311 186v1M312 174v1M312 176v1M312 178v1M312 180v1M313 168v1M313 170v1M313 172v1M314 160v1M314 162v1M314 164v1M314 166v1M315 158v1M335 550v1M336 551v1M337 552v13M338 551v1M339 550v1M340 551v1M341 552v13M342 551v1M343 550v1M344 551v1M345 552v13M346 565v1M349 565v1M350 561v4M383 423v1M393 440v5M394 445v2M399 440v17M404 445v2M405 440v5M407 195v1M420 166v1M420 178v1M421 165v1M421 167v1M421 177v1M421 179v1M422 168v1M422 176v1M423 169v2M423 174v2M424 171v3M429 166v1M429 178v1M430 167v1M430 177v1M431 168v2M431 175v2M432 170v5M493 123v1M493 139v1M494 124v1M494 138v1M495 125v1M495 137v1M496 126v2M496 135v2M497 128v7M505 128v7M506 126v2M506 135v2M507 125v1M507 137v1M508 124v1M508 138v1M509 123v1M509 139v1M744 136v1M744 179v1M744 184v1M744 219v1M744 221v2M745 137v7M745 177v2M745 182v2M745 247v1M745 253v1M745 316v3M745 326v3M746 136v1M746 176v2M746 181v2M746 248v1M746 252v1M746 319v1M746 329v1M747 137v7M747 178v2M747 183v2M747 221v2M747 249v3M747 327v1M748 136v1M748 316v9M748 326v1M748 328v1M748 330v5M749 137v7M749 176v2M749 181v2M749 219v2M749 327v1M750 178v2M750 183v2M750 247v2M750 252v2M750 319v1M750 329v1M751 177v2M751 182v2M751 249v3M751 316v3M751 326v3M752 142v2M752 176v1M752 181v1M752 219v2M752 222v1"/>
<path stroke="#00ffff" transform="translate(0 .5)" d="M314 156h2M312 157h2M310 158h2M308 159h2M305 160h3M303 161h3M301 162h2M299 163h2M296 164h3M294 165h3M292 166h2M290 167h2M288 168h2M285 169h3M283 170h3M281 171h2M279 172h2M276 173h3M274 174h3M272 175h2M270 176h2M267 177h3M265 178h3M263 179h3M261 180h2M258 181h3M256 182h3M254 183h3M252 184h3M250 185h2M247 186h3M245 187h3M243 188h3M241 189h2M238 190h3M236 191h3M234 192h3M232 193h3M229 194h3M227 195h3M225 196h3M223 197h3M220 198h4M218 199h3M216 200h3M214 201h3M211 202h4M209 203h3M207 204h3M205 205h3M203 206h3M200 207h4M198 208h3M196 209h3M194 210h3M191 211h4M189 212h3M187 213h3M185 214h3M183 215h3M182 216h2"/>
<path stroke="#00ffff" transform="translate(.5 0)" d="M229 423v1M232 423v1M235 423v1M238 423v1M241 423v1M244 422v1M247 422v1M250 422v1M253 422v1M256 422v1M259 422v1M262 422v1M265 422v1M268 422v1M271 422v1M274 421v1M277 421v1M280 421v1M283 421v1M286 421v1M289 421v1M292 421v1M295 421v1M298 421v1M301 421v1M304 420v1M307 420v1M310 420v1M313 420v1M316 420v1M319 420v1M322 420v1M325 420v1M328 420v1M331 420v1M334 419v1M337 419v1M340 419v1M343 419v1M346 419v1M349 419v1M352 419v1M355 419v1M358 419v1M361 419v1M364 418v1M367 418v1M370 418v1M373 418v1M376 418v1"/>
<path stroke="#007f7f" transform="translate(0 .5)" d="M747 336h3M745 342h2M750 342h2M428 414h5M424 426h3M434 426h3"/>
<path stroke="#007f7f" transform="translate(.5 0)" d="M408 401v1M422 428v1M423 427v1M423 429v1M424 418v5M424 430v1M425 417v1M425 423v1M425 429v1M426 416v1M426 424v5M427 415v1M433 415v1M434 416v1M434 424v5M435 417v1M435 423v1M435 429v1M436 418v5M436 430v1M437 427v1M437 429v1M438 428v1M744 343v1M745 338v3M745 344v1M746 337v1M746 341v3M750 337v1M750 341v3M751 338v3M751 344v1M752 343v1"/>
</g>
<g id="hn" shape-rendering="auto">
<text transform="translate(94.5 348) scale(1 1.23)" fill="#ff0000">1</text>
<text transform="translate(136.5 435) scale(1 1.23)" fill="#ffff00">2</text>
<text transform="translate(225.5 500) scale(1 1.23)" fill="#00ff00">3</text>
<text transform="translate(342.5 509) scale(1 1.23)" fill="#0000ff">4</text>
<text transform="translate(446.5 453) scale(1 1.23)" fill="#ff0000">5</text>
<text transform="translate(502.5 357) scale(1 1.23)" fill="#ffff00">6</text>
<text transform="translate(504.5 260) scale(1 1.23)" fill="#00ff00">7</text>
<text transform="translate(462.5 173) scale(1 1.23)" fill="#0000ff">8</text>
<text transform="translate(373.5 108) scale(1 1.23)" fill="#ff0000">9</text>
<text transform="translate(257.2 99) scale(1 1.23)" fill="#ffff00">10</text>
<text transform="translate(153.2 155) scale(1 1.23)" fill="#00ff00">11</text>
<text transform="translate(97.2 251) scale(1 1.23)" fill="#0000ff">12</text>
<text x="119.5" y="308" fill="#f00" style="font-family:'Liberation Sans',sans-serif;font-size:23.5px" textLength="17" lengthAdjust="spacingAndGlyphs">Asc</text><text x="309.5" y="129" fill="#ff0" style="font-family:'Liberation Sans',sans-serif;font-size:23.5px" textLength="17" lengthAdjust="spacingAndGlyphs">MC</text>
</g>
</svg>
<div id="side">
<div style="top:7px"><span class="w">Astrolog 5.40</span></div>
<div style="top:17px">&quot;null&quot;</div>
<div style="top:27px">Fri April 19, 1974</div>
<div style="top:37px"> 1:00pm (DT +8:00 GMT)</div>
<div style="top:47px">&quot;&quot;</div>
<div style="top:57px">121°30E 25°03N</div>
<div style="top:67px">Placidus houses.</div>
<div style="top:77px">Tropical, Geocentric.</div>
<div style="top:87px">Julian Day = 2442156.6667</div>
<div style="top:107px"><span class="r"> 1st house: </span><span class="r"> 5Leo15</span></div>
<div style="top:117px"><span class="y"> 2nd house: </span><span class="r">29Leo55</span></div>
<div style="top:127px"><span class="g"> 3rd house: </span><span class="y">28Vir20</span></div>
<div style="top:137px"><span class="b"> 4th house: </span><span class="b"> 0Sco29</span></div>
<div style="top:147px"><span class="r"> 5th house: </span><span class="r"> 3Sag49</span></div>
<div style="top:157px"><span class="y"> 6th house: </span><span class="y"> 5Cap37</span></div>
<div style="top:167px"><span class="g"> 7th house: </span><span class="g"> 5Aqu15</span></div>
<div style="top:177px"><span class="b"> 8th house: </span><span class="g">29Aqu55</span></div>
<div style="top:187px"><span class="r"> 9th house: </span><span class="b">28Pis20</span></div>
<div style="top:197px"><span class="y">10th house: </span><span class="y"> 0Tau29</span></div>
<div style="top:207px"><span class="g">11th house: </span><span class="g"> 3Gem49</span></div>
<div style="top:217px"><span class="b">12th house: </span><span class="b"> 5Can37</span></div>
<div style="top:237px"><span class="r"> Sun: </span><span class="r">28Ari43</span>  - 0°00'</div>
<div style="top:247px"><span class="b">Moon: </span><span class="b">19Pis12</span>  + 5°06'</div>
<div style="top:257px"><span class="g">Merc: </span><span class="r">12Ari47</span>  - 2°11'</div>
<div style="top:267px"><span class="g">Venu: </span><span class="b">12Pis58</span>  - 0°14'</div>
<div style="top:277px"><span class="r">Mars: </span><span class="g">29Gem18</span>  + 1°32'</div>
<div style="top:287px"><span class="r">Jupi: </span><span class="b"> 9Pis05</span>  - 0°54'</div>
<div style="top:297px"><span class="y">Satu: </span><span class="b"> 0Can01</span>  - 0°43'</div>
<div style="top:307px"><span class="g">Uran: </span><span class="g">25Lib37</span><span class="w">R</span> + 0°36'</div>
<div style="top:317px"><span class="b">Nept: </span><span class="r"> 9Sag14</span><span class="w">R</span> + 1°38'</div>
<div style="top:327px"><span class="b">Plut: </span><span class="g"> 4Lib51</span><span class="w">R</span> +17°08'</div>
<div style="top:337px"><span class="c">Node: </span><span class="r">22Sag11</span><span class="w">R</span> + 0°00'</div>
<div style="top:357px">Fire: 5, Earth: 1,</div>
<div style="top:367px">Air : 3, Water: 4</div>
<div style="top:377px">Car: 5, Fix: 2, Mut: 6</div>
<div style="top:387px">Yang: 8, Yin: 5</div>
<div style="top:397px">M: 7, N: 4, A: 4, D: 7</div>
<div style="top:407px">Ang: 0, Suc: 7, Cad: 4</div>
<div style="top:417px">Learn: 6, Share: 7</div>
</div>
</body></html>
